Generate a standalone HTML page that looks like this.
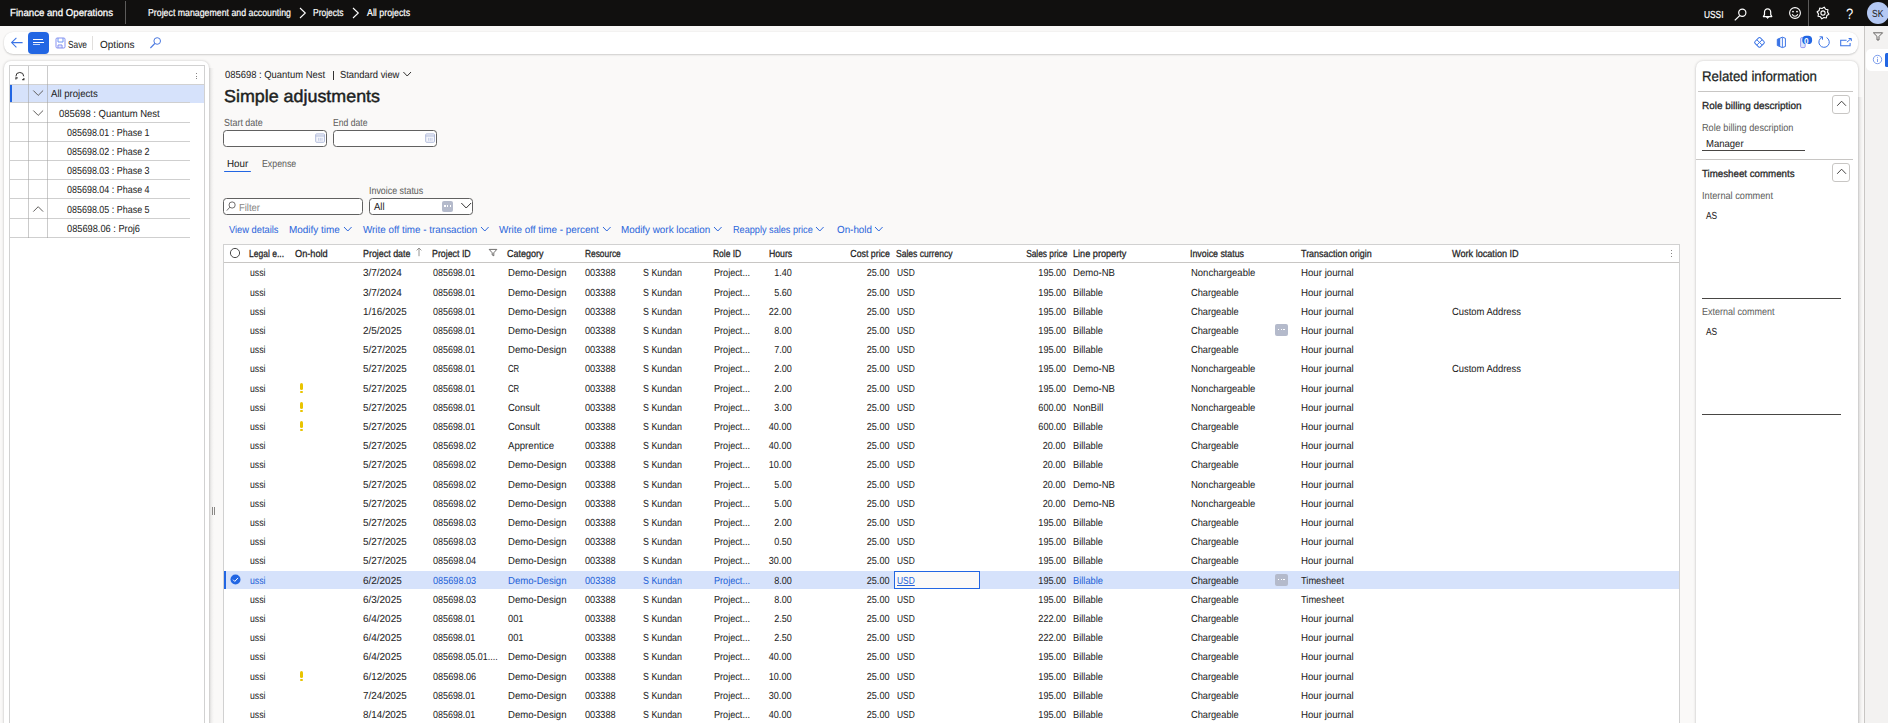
<!DOCTYPE html>
<html lang="en"><head><meta charset="utf-8"><title>Simple adjustments</title>
<style>
html,body{margin:0;padding:0}
body{width:1888px;height:723px;overflow:hidden;position:relative;background:#faf9f8;font-family:'Liberation Sans', sans-serif;text-rendering:geometricPrecision}
.t{position:absolute;white-space:pre;display:block}
</style></head><body>
<div style="position:absolute;left:0px;top:0px;width:1888px;height:26px;background:#11100f"></div>
<div style="position:absolute;left:125px;top:1px;width:1px;height:23px;background:#5c5b5a"></div>
<svg style="position:absolute;left:298px;top:6px;" width="10" height="14" viewBox="0 0 10 14" fill="none"><polyline points="2,2 7.3,7 2,12" stroke="#fff" stroke-width="1.1"/></svg>
<svg style="position:absolute;left:351px;top:6px;" width="10" height="14" viewBox="0 0 10 14" fill="none"><polyline points="2,2 7.3,7 2,12" stroke="#fff" stroke-width="1.1"/></svg>
<svg style="position:absolute;left:1733px;top:6.6px;" width="16" height="16" viewBox="0 0 16 16" fill="none"><circle cx="9.3" cy="5.8" r="3.6" stroke="#fff" stroke-width="1.2"/><line x1="6.7" y1="8.6" x2="1.8" y2="13.4" stroke="#fff" stroke-width="1.3"/></svg>
<svg style="position:absolute;left:1760px;top:6px;" width="16" height="16" viewBox="0 0 16 16" fill="none"><path d="M7.6 2.8c-2 0-3.1 1.5-3.1 3.3v2.5L3.4 10.6h8.4l-1.1-2V6.1c0-1.8-1.1-3.3-3.1-3.3z" stroke="#fff" stroke-width="1.2" stroke-linejoin="round"/><path d="M6.4 11.2h2.4l-1.2 1.4z" fill="#fff" stroke="#fff" stroke-width=".6"/></svg>
<svg style="position:absolute;left:1787px;top:5px;" width="16" height="16" viewBox="0 0 16 16" fill="none"><circle cx="8" cy="8" r="5.4" stroke="#fff" stroke-width="1.1"/><circle cx="6" cy="6.6" r=".9" fill="#fff"/><circle cx="10" cy="6.6" r=".9" fill="#fff"/><path d="M5.2 9.3c.6 1.3 1.6 1.9 2.8 1.9s2.2-.6 2.8-1.9" stroke="#fff" stroke-width="1.1"/></svg>
<div style="position:absolute;left:1808px;top:0px;width:1px;height:26px;background:#5c5b5a"></div>
<svg style="position:absolute;left:1815px;top:5px;" width="16" height="16" viewBox="0 0 16 16" fill="none"><polygon points="13.88,9.17 11.82,10.56 11.33,12.99 8.90,12.51 6.83,13.88 5.44,11.82 3.01,11.33 3.49,8.90 2.12,6.83 4.18,5.44 4.67,3.01 7.10,3.49 9.17,2.12 10.56,4.18 12.99,4.67 12.51,7.10" stroke="#fff" stroke-width="1.1" stroke-linejoin="round"/><circle cx="8" cy="8" r="2.1" stroke="#fff" stroke-width="1.1"/></svg>
<div style="position:absolute;left:1866.5px;top:2px;width:22px;height:22px;background:#b4c8f3;border-radius:50%"></div>
<div style="position:absolute;left:4px;top:32px;width:1854px;height:22px;background:#fff;border-radius:9px;box-shadow:0 1px 2px rgba(0,0,0,.16),0 0 2px rgba(0,0,0,.08)"></div>
<div style="position:absolute;left:28px;top:32px;width:21px;height:22px;background:#2266e3;border-radius:4px"></div>
<div style="position:absolute;left:32.75px;top:39.3px;width:9.8px;height:1.1px;background:#fff"></div>
<div style="position:absolute;left:32.75px;top:41.8px;width:11.3px;height:1.1px;background:#fff"></div>
<div style="position:absolute;left:32.75px;top:44.2px;width:7.5px;height:1.1px;background:rgba(255,255,255,.75)"></div>
<svg style="position:absolute;left:10px;top:36px;" width="14" height="14" viewBox="0 0 14 14" fill="none"><path d="M12.6 6.6H1.8M6.4 1.8L1.6 6.6l4.8 4.8" stroke="#3b74e6" stroke-width="1.05"/></svg>
<svg style="position:absolute;left:54.5px;top:36.5px;" width="12" height="12" viewBox="0 0 12 12" fill="none"><rect x="1" y="1" width="9" height="10" rx="1.2" stroke="#8791f1" stroke-width="1"/><path d="M3 1v4h5V1" stroke="#6f96f3" stroke-width="1"/><path d="M3 11V8h4v3" stroke="#7d8af0" stroke-width="1"/><path d="M5 9.4v1.4" stroke="#9aa6f3" stroke-width=".9"/></svg>
<div style="position:absolute;left:92px;top:36px;width:1px;height:14px;background:#e1dfdd"></div>
<svg style="position:absolute;left:149px;top:36px;" width="14" height="14" viewBox="0 0 14 14" fill="none"><circle cx="8.2" cy="5" r="3.3" stroke="#4a78e0" stroke-width="1"/><line x1="5.8" y1="7.5" x2="1.4" y2="12" stroke="#4a78e0" stroke-width="1.1"/></svg>
<svg style="position:absolute;left:1752px;top:35px;" width="15" height="15" viewBox="0 0 15 15" fill="none"><rect x="3.7" y="3.6" width="7.6" height="7.6" rx="1.3" transform="rotate(45 7.5 7.4)" stroke="#3b74e6" stroke-width="1"/><path d="M5 4.9l5 5M10 4.9l-5 5" stroke="#3b74e6" stroke-width="1"/></svg>
<svg style="position:absolute;left:1774px;top:35px;" width="15" height="15" viewBox="0 0 15 15" fill="none"><path d="M3.3 4.3L8.4 2.2l3 1.1v8.2l-3 1.1L3.3 10.5z" stroke="#3b74e6" stroke-width="1" stroke-linejoin="round"/><path d="M3.3 4.3L6.2 3.2v8.4L3.3 10.5z" fill="#3b74e6"/><path d="M8.4 2.4v10" stroke="#3b74e6" stroke-width=".9"/></svg>
<svg style="position:absolute;left:1798px;top:33px;" width="16" height="18" viewBox="0 0 16 18" fill="none"><rect x="2.6" y="4.6" width="4.6" height="10" rx="1.2" stroke="#8f8ff0" stroke-width=".9" fill="#dfe8fb"/><rect x="4.3" y="2.8" width="9.8" height="8.3" rx="3.9" fill="#2266e3"/></svg>
<svg style="position:absolute;left:1817.2px;top:35.1px;" width="14" height="14" viewBox="0 0 14 14" fill="none"><path d="M5.2 2.3A5.2 5.2 0 1 0 9.6 2.6" stroke="#3b74e6" stroke-width="1"/><path d="M2.6 1.8h2.9v2.9" stroke="#3b74e6" stroke-width="1"/></svg>
<svg style="position:absolute;left:1839px;top:36px;" width="14" height="13" viewBox="0 0 14 13" fill="none"><path d="M7.6 4.2H1.7v5.6h9.4V7" stroke="#3b74e6" stroke-width="1.05"/><path d="M7.9 6.2l4-3.4M9.6 2.5h2.7v2.6" stroke="#3b74e6" stroke-width="1"/></svg>
<div style="position:absolute;left:1865px;top:26px;width:23px;height:700px;background:#f3f2f1"></div>
<div style="position:absolute;left:1864px;top:26px;width:1px;height:700px;background:#c8c6c4"></div>
<svg style="position:absolute;left:1870px;top:29px;" width="15" height="14" viewBox="0 0 15 14" fill="none"><path d="M3.4 3.8h9.2L9 7.4v3.6H7V7.4z" stroke="#605e5c" stroke-width=".95" stroke-linejoin="round"/></svg>
<div style="position:absolute;left:1866px;top:49px;width:22px;height:22px;background:#fff;border-radius:5px 0 0 5px"></div>
<svg style="position:absolute;left:1872px;top:53.5px;" width="11" height="11" viewBox="0 0 11 11" fill="none"><circle cx="5.5" cy="5.5" r="4.2" stroke="#6f93ea" stroke-width=".9"/><line x1="5.5" y1="4.8" x2="5.5" y2="8" stroke="#6f93ea" stroke-width=".9"/><circle cx="5.5" cy="3.3" r=".55" fill="#6f93ea"/></svg>
<div style="position:absolute;left:1885px;top:53px;width:3px;height:13.5px;background:#2266e3;border-radius:1.5px 0 0 1.5px"></div>
<div style="position:absolute;left:4px;top:61px;width:205px;height:700px;background:#fff;border-radius:7px;box-shadow:0 0 3px rgba(0,0,0,.16),0 1px 3px rgba(0,0,0,.10)"></div>
<div style="position:absolute;left:9px;top:65px;width:196px;height:700px;border:1px solid #d1d1d1;box-sizing:border-box"></div>
<div style="position:absolute;left:10px;top:84px;width:194px;height:1px;background:#d1d1d1"></div>
<div style="position:absolute;left:10px;top:85px;width:194px;height:18px;background:#d6e2fb"></div>
<div style="position:absolute;left:10px;top:85px;width:2px;height:18px;background:#2266e3"></div>
<div style="position:absolute;left:10px;top:102px;width:179.5px;height:1px;background:#cfcfcf"></div>
<div style="position:absolute;left:10px;top:122px;width:179.5px;height:1px;background:#cfcfcf"></div>
<div style="position:absolute;left:10px;top:141px;width:179.5px;height:1px;background:#cfcfcf"></div>
<div style="position:absolute;left:10px;top:160px;width:179.5px;height:1px;background:#cfcfcf"></div>
<div style="position:absolute;left:10px;top:179px;width:179.5px;height:1px;background:#cfcfcf"></div>
<div style="position:absolute;left:10px;top:198px;width:179.5px;height:1px;background:#cfcfcf"></div>
<div style="position:absolute;left:10px;top:218px;width:179.5px;height:1px;background:#cfcfcf"></div>
<div style="position:absolute;left:10px;top:237px;width:179.5px;height:1px;background:#cfcfcf"></div>
<div style="position:absolute;left:28px;top:66px;width:1px;height:172px;background:rgba(160,160,160,.55)"></div>
<div style="position:absolute;left:47px;top:66px;width:1px;height:172px;background:rgba(160,160,160,.55)"></div>
<svg style="position:absolute;left:13.5px;top:70px;" width="12" height="12" viewBox="0 0 12 12" fill="none"><path d="M1.9 6.4a3.9 3.9 0 0 1 7.8-.1" stroke="#323130" stroke-width="1"/><path d="M1.9 9.6V7.9h1.8" stroke="#323130" stroke-width="1.1"/><path d="M9.9 7.9v1.7H8.2" stroke="#323130" stroke-width="1.1"/></svg>
<div style="position:absolute;left:196.4px;top:72.6px;width:1.1px;height:1.1px;background:#605e5c;border-radius:50%"></div>
<div style="position:absolute;left:196.4px;top:75.5px;width:1.1px;height:1.1px;background:#605e5c;border-radius:50%"></div>
<div style="position:absolute;left:196.4px;top:78.39999999999999px;width:1.1px;height:1.1px;background:#605e5c;border-radius:50%"></div>
<svg style="position:absolute;left:32px;top:88px;" width="12" height="10" viewBox="0 0 12 10" fill="none"><polyline points="1.3,2.5 6.2,7.4 11.1,2.5" stroke="#605e5c" stroke-width="1"/></svg>
<svg style="position:absolute;left:32px;top:108px;" width="12" height="10" viewBox="0 0 12 10" fill="none"><polyline points="1.3,2.5 6.2,7.4 11.1,2.5" stroke="#605e5c" stroke-width="1"/></svg>
<svg style="position:absolute;left:32px;top:204px;" width="12" height="10" viewBox="0 0 12 10" fill="none"><polyline points="1.3,7.6 6.2,2.7 11.1,7.6" stroke="#605e5c" stroke-width="1"/></svg>
<div style="position:absolute;left:209px;top:68px;width:4.5px;height:700px;background:linear-gradient(90deg,rgba(0,0,0,.075),rgba(0,0,0,0))"></div>
<div style="position:absolute;left:211.8px;top:506.5px;width:1.2px;height:8px;background:#8a8886"></div>
<div style="position:absolute;left:213.7px;top:506.5px;width:1.2px;height:8px;background:#8a8886"></div>
<div style="position:absolute;left:333px;top:70.5px;width:1px;height:9.5px;background:#323130"></div>
<svg style="position:absolute;left:402px;top:70px;" width="11" height="9" viewBox="0 0 11 9" fill="none"><polyline points="1.4,2 5.2,6 9,2" stroke="#323130" stroke-width="1"/></svg>
<div style="position:absolute;left:223px;top:130px;width:104px;height:17px;background:#fff;border:1px solid #616161;border-radius:3.5px;box-sizing:border-box"></div>
<div style="position:absolute;left:333px;top:130px;width:104px;height:17px;background:#fff;border:1px solid #616161;border-radius:3.5px;box-sizing:border-box"></div>
<svg style="position:absolute;left:315.2px;top:132.9px;" width="10.4" height="10.4" viewBox="0 0 10.4 10.4" fill="none"><rect x=".7" y=".9" width="8.8" height="8.4" rx=".9" stroke="#a9b4d6" stroke-width=".9" fill="#f4f6fc"/><line x1=".7" y1="3" x2="9.5" y2="3" stroke="#a9b4d6" stroke-width=".9"/><path d="M3.6 4.9v2.9M5.3 4.9v2.9M7 4.9v2.9" stroke="#b9c2de" stroke-width=".8"/></svg>
<svg style="position:absolute;left:425.2px;top:132.9px;" width="10.4" height="10.4" viewBox="0 0 10.4 10.4" fill="none"><rect x=".7" y=".9" width="8.8" height="8.4" rx=".9" stroke="#a9b4d6" stroke-width=".9" fill="#f4f6fc"/><line x1=".7" y1="3" x2="9.5" y2="3" stroke="#a9b4d6" stroke-width=".9"/><path d="M3.6 4.9v2.9M5.3 4.9v2.9M7 4.9v2.9" stroke="#b9c2de" stroke-width=".8"/></svg>
<div style="position:absolute;left:223.8px;top:170.5px;width:27.5px;height:1.5px;background:#2266e3;border-radius:1px"></div>
<div style="position:absolute;left:223px;top:198px;width:140px;height:17px;background:#fff;border:1px solid #616161;border-radius:3.5px;box-sizing:border-box"></div>
<svg style="position:absolute;left:225.8px;top:201px;" width="10" height="11" viewBox="0 0 10 11" fill="none"><circle cx="6.1" cy="4" r="3.1" stroke="#605e5c" stroke-width=".9"/><line x1="3.8" y1="6.2" x2=".8" y2="9.6" stroke="#605e5c" stroke-width=".9"/></svg>
<div style="position:absolute;left:369px;top:198px;width:104px;height:17px;background:#fff;border:1px solid #616161;border-radius:3.5px;box-sizing:border-box"></div>
<div style="position:absolute;left:442px;top:200.5px;width:11.3px;height:11px;background:#b4bacb;border-radius:2px"></div>
<div style="position:absolute;left:444.3px;top:205.3px;width:1.3px;height:1.3px;background:#fff"></div>
<div style="position:absolute;left:446.90000000000003px;top:205.3px;width:1.3px;height:1.3px;background:#fff"></div>
<div style="position:absolute;left:449.5px;top:205.3px;width:1.3px;height:1.3px;background:#fff"></div>
<svg style="position:absolute;left:459.5px;top:201px;" width="12" height="10" viewBox="0 0 12 10" fill="none"><polyline points="1.3,2 6.2,7 11.1,2" stroke="#323130" stroke-width="1"/></svg>
<svg style="position:absolute;left:343.15px;top:225.2px;" width="10" height="9" viewBox="0 0 10 9" fill="none"><polyline points="1,2 4.8,6 8.6,2" stroke="#2e68dc" stroke-width="1"/></svg>
<svg style="position:absolute;left:479.9px;top:225.2px;" width="10" height="9" viewBox="0 0 10 9" fill="none"><polyline points="1,2 4.8,6 8.6,2" stroke="#2e68dc" stroke-width="1"/></svg>
<svg style="position:absolute;left:601.9px;top:225.2px;" width="10" height="9" viewBox="0 0 10 9" fill="none"><polyline points="1,2 4.8,6 8.6,2" stroke="#2e68dc" stroke-width="1"/></svg>
<svg style="position:absolute;left:712.9px;top:225.2px;" width="10" height="9" viewBox="0 0 10 9" fill="none"><polyline points="1,2 4.8,6 8.6,2" stroke="#2e68dc" stroke-width="1"/></svg>
<svg style="position:absolute;left:815.4px;top:225.2px;" width="10" height="9" viewBox="0 0 10 9" fill="none"><polyline points="1,2 4.8,6 8.6,2" stroke="#2e68dc" stroke-width="1"/></svg>
<svg style="position:absolute;left:874.4px;top:225.2px;" width="10" height="9" viewBox="0 0 10 9" fill="none"><polyline points="1,2 4.8,6 8.6,2" stroke="#2e68dc" stroke-width="1"/></svg>
<div style="position:absolute;left:223px;top:244px;width:1457px;height:500px;background:#fff;border:1px solid #d1d1d1;box-sizing:border-box"></div>
<div style="position:absolute;left:224px;top:262px;width:1455px;height:1px;background:#c8c6c4"></div>
<svg style="position:absolute;left:229px;top:246.7px;" width="12" height="12" viewBox="0 0 12 12" fill="none"><circle cx="6" cy="6" r="4.6" stroke="#4a4a4a" stroke-width="1" fill="#fff"/></svg>
<svg style="position:absolute;left:414.5px;top:247px;" width="8" height="10" viewBox="0 0 8 10" fill="none"><path d="M4 9.2V1.2M1.6 3.4L4 1l2.4 2.4" stroke="#8a8886" stroke-width=".9"/></svg>
<svg style="position:absolute;left:488.2px;top:247.7px;" width="10" height="9" viewBox="0 0 10 9" fill="none"><path d="M1.2 1.4h7.6L5.8 4.8v3L4.2 7V4.8z" stroke="#605e5c" stroke-width=".9" stroke-linejoin="round"/></svg>
<div style="position:absolute;left:1670.6px;top:250.4px;width:1.1px;height:1.1px;background:#605e5c;border-radius:50%"></div>
<div style="position:absolute;left:1670.6px;top:253.3px;width:1.1px;height:1.1px;background:#605e5c;border-radius:50%"></div>
<div style="position:absolute;left:1670.6px;top:256.2px;width:1.1px;height:1.1px;background:#605e5c;border-radius:50%"></div>
<div style="position:absolute;left:1275.3px;top:323.9px;width:12.6px;height:12.4px;background:#b4bacb;border-radius:2px"></div>
<div style="position:absolute;left:1277.9px;top:329.1px;width:1.4px;height:1.4px;background:#fff"></div>
<div style="position:absolute;left:1280.6000000000001px;top:329.1px;width:1.4px;height:1.4px;background:#fff"></div>
<div style="position:absolute;left:1283.3000000000002px;top:329.1px;width:1.4px;height:1.4px;background:#fff"></div>
<div style="position:absolute;left:300.2px;top:382.9px;width:3.2px;height:7.2px;background:#e9c400;border-radius:1.6px"></div>
<div style="position:absolute;left:300.4px;top:391.0px;width:2.8px;height:2.1px;background:#e9c400;border-radius:1px"></div>
<div style="position:absolute;left:300.2px;top:401.9px;width:3.2px;height:7.2px;background:#e9c400;border-radius:1.6px"></div>
<div style="position:absolute;left:300.4px;top:410.0px;width:2.8px;height:2.1px;background:#e9c400;border-radius:1px"></div>
<div style="position:absolute;left:300.2px;top:420.9px;width:3.2px;height:7.2px;background:#e9c400;border-radius:1.6px"></div>
<div style="position:absolute;left:300.4px;top:429.0px;width:2.8px;height:2.1px;background:#e9c400;border-radius:1px"></div>
<div style="position:absolute;left:224px;top:571px;width:1455px;height:18.4px;background:#d6e2fb"></div>
<div style="position:absolute;left:224px;top:571px;width:2.2px;height:18.4px;background:#2266e3"></div>
<svg style="position:absolute;left:229.5px;top:574.3px;" width="11" height="11" viewBox="0 0 11 11" fill="none"><circle cx="5.5" cy="5.5" r="5" fill="#2266e3"/><polyline points="3.1,5.7 4.8,7.4 8,3.9" stroke="#fff" stroke-width="1"/></svg>
<div style="position:absolute;left:894px;top:571.2px;width:86px;height:17.4px;background:#faf9f8;border:1px solid #2266e3;box-sizing:border-box"></div>
<div style="position:absolute;left:1275.3px;top:573.9px;width:12.6px;height:12.4px;background:#b4bacb;border-radius:2px"></div>
<div style="position:absolute;left:1277.9px;top:579.1px;width:1.4px;height:1.4px;background:#fff"></div>
<div style="position:absolute;left:1280.6000000000001px;top:579.1px;width:1.4px;height:1.4px;background:#fff"></div>
<div style="position:absolute;left:1283.3000000000002px;top:579.1px;width:1.4px;height:1.4px;background:#fff"></div>
<div style="position:absolute;left:300.2px;top:670.9px;width:3.2px;height:7.2px;background:#e9c400;border-radius:1.6px"></div>
<div style="position:absolute;left:300.4px;top:679.0px;width:2.8px;height:2.1px;background:#e9c400;border-radius:1px"></div>
<div style="position:absolute;left:1696px;top:61px;width:162px;height:700px;background:#fff;border-radius:7px;box-shadow:0 0 3px rgba(0,0,0,.16),0 1px 3px rgba(0,0,0,.10)"></div>
<div style="position:absolute;left:1858px;top:97px;width:4.5px;height:700px;background:linear-gradient(90deg,rgba(0,0,0,.085),rgba(0,0,0,0))"></div>
<div style="position:absolute;left:1698px;top:91px;width:155px;height:1px;background:#c8c6c4"></div>
<div style="position:absolute;left:1832px;top:95.4px;width:18px;height:18.4px;background:#fff;border:1px solid #c8c6c4;border-radius:3px;box-sizing:border-box"></div>
<svg style="position:absolute;left:1835.5px;top:98.6px;" width="11" height="9" viewBox="0 0 11 9" fill="none"><polyline points="1.2,6.8 5.6,2.2 10,6.8" stroke="#3b3a39" stroke-width=".95"/></svg>
<div style="position:absolute;left:1701.5px;top:150px;width:103px;height:1px;background:#484644"></div>
<div style="position:absolute;left:1696px;top:159px;width:157px;height:1px;background:#c8c6c4"></div>
<div style="position:absolute;left:1832px;top:163.4px;width:18px;height:19px;background:#fff;border:1px solid #c8c6c4;border-radius:3px;box-sizing:border-box"></div>
<svg style="position:absolute;left:1835.5px;top:167.1px;" width="11" height="9" viewBox="0 0 11 9" fill="none"><polyline points="1.2,6.8 5.6,2.2 10,6.8" stroke="#3b3a39" stroke-width=".95"/></svg>
<div style="position:absolute;left:1701.5px;top:298px;width:139px;height:1px;background:#484644"></div>
<div style="position:absolute;left:1701.5px;top:414px;width:139px;height:1px;background:#484644"></div>
<span class="t" style="left:10.30px;transform-origin:0 50%;top:7.25px;font-size:10.2px;line-height:14px;color:#fff;transform:scaleX(0.9471);-webkit-text-stroke:0.27px #fff;">Finance and Operations</span>
<span class="t" style="left:147.80px;transform-origin:0 50%;top:7.25px;font-size:10.2px;line-height:14px;color:#fff;transform:scaleX(0.8618);-webkit-text-stroke:0.2px #fff;">Project management and accounting</span>
<span class="t" style="left:313.30px;transform-origin:0 50%;top:7.25px;font-size:10.2px;line-height:14px;color:#fff;transform:scaleX(0.8285);-webkit-text-stroke:0.2px #fff;">Projects</span>
<span class="t" style="left:366.55px;transform-origin:0 50%;top:7.25px;font-size:10.2px;line-height:14px;color:#fff;transform:scaleX(0.8680);-webkit-text-stroke:0.2px #fff;">All projects</span>
<span class="t" style="left:1703.55px;transform-origin:0 50%;top:9.25px;font-size:10.2px;line-height:14px;color:#fff;transform:scaleX(0.8200);-webkit-text-stroke:0.2px #fff;">USSI</span>
<span class="t" style="left:1845.70px;transform-origin:0 50%;top:5.25px;font-size:15px;line-height:20px;color:#fff;transform:scaleX(0.8629);-webkit-text-stroke:0.0px #fff;">?</span>
<span class="t" style="left:1872.40px;transform-origin:0 50%;top:8.25px;font-size:10.2px;line-height:14px;color:#242424;transform:scaleX(0.8386);-webkit-text-stroke:0.04px #242424;">SK</span>
<span class="t" style="left:67.80px;transform-origin:0 50%;top:39.25px;font-size:10.2px;line-height:14px;color:#242424;transform:scaleX(0.8178);-webkit-text-stroke:0.04px #242424;">Save</span>
<span class="t" style="left:99.80px;transform-origin:0 50%;top:39.25px;font-size:10.2px;line-height:14px;color:#242424;transform:scaleX(0.9826);-webkit-text-stroke:0.04px #242424;">Options</span>
<span class="t" style="left:1804.20px;transform-origin:0 50%;top:35.25px;font-size:8.5px;line-height:12px;color:#fff;transform:scaleX(0.9716);font-weight:700;">0</span>
<span class="t" style="left:51.40px;transform-origin:0 50%;top:88.25px;font-size:10.2px;line-height:14px;color:#242424;transform:scaleX(0.9392);-webkit-text-stroke:0.04px #242424;">All projects</span>
<span class="t" style="left:58.80px;transform-origin:0 50%;top:108.25px;font-size:10.2px;line-height:14px;color:#242424;transform:scaleX(0.9314);-webkit-text-stroke:0.04px #242424;">085698 : Quantum Nest</span>
<span class="t" style="left:66.90px;transform-origin:0 50%;top:127.25px;font-size:10.2px;line-height:14px;color:#242424;transform:scaleX(0.8784);-webkit-text-stroke:0.04px #242424;">085698.01 : Phase 1</span>
<span class="t" style="left:66.90px;transform-origin:0 50%;top:146.25px;font-size:10.2px;line-height:14px;color:#242424;transform:scaleX(0.8784);-webkit-text-stroke:0.04px #242424;">085698.02 : Phase 2</span>
<span class="t" style="left:66.90px;transform-origin:0 50%;top:165.25px;font-size:10.2px;line-height:14px;color:#242424;transform:scaleX(0.8784);-webkit-text-stroke:0.04px #242424;">085698.03 : Phase 3</span>
<span class="t" style="left:66.90px;transform-origin:0 50%;top:184.25px;font-size:10.2px;line-height:14px;color:#242424;transform:scaleX(0.8784);-webkit-text-stroke:0.04px #242424;">085698.04 : Phase 4</span>
<span class="t" style="left:66.90px;transform-origin:0 50%;top:204.25px;font-size:10.2px;line-height:14px;color:#242424;transform:scaleX(0.8784);-webkit-text-stroke:0.04px #242424;">085698.05 : Phase 5</span>
<span class="t" style="left:66.90px;transform-origin:0 50%;top:223.25px;font-size:10.2px;line-height:14px;color:#242424;transform:scaleX(0.9075);-webkit-text-stroke:0.04px #242424;">085698.06 : Proj6</span>
<span class="t" style="left:224.55px;transform-origin:0 50%;top:69.25px;font-size:10.2px;line-height:14px;color:#242424;transform:scaleX(0.9245);-webkit-text-stroke:0.04px #242424;">085698 : Quantum Nest</span>
<span class="t" style="left:340.40px;transform-origin:0 50%;top:69.25px;font-size:10.2px;line-height:14px;color:#242424;transform:scaleX(0.9200);-webkit-text-stroke:0.04px #242424;">Standard view</span>
<span class="t" style="left:223.80px;transform-origin:0 50%;top:85.25px;font-size:17.3px;line-height:22px;color:#201f1e;transform:scaleX(1.0344);-webkit-text-stroke:0.45px #201f1e;">Simple adjustments</span>
<span class="t" style="left:223.55px;transform-origin:0 50%;top:117.25px;font-size:10.2px;line-height:14px;color:#605e5c;transform:scaleX(0.8769);-webkit-text-stroke:0.04px #605e5c;">Start date</span>
<span class="t" style="left:333.30px;transform-origin:0 50%;top:117.25px;font-size:10.2px;line-height:14px;color:#605e5c;transform:scaleX(0.8457);-webkit-text-stroke:0.04px #605e5c;">End date</span>
<span class="t" style="left:227.30px;transform-origin:0 50%;top:158.25px;font-size:10.2px;line-height:14px;color:#242424;transform:scaleX(0.9618);-webkit-text-stroke:0.04px #242424;">Hour</span>
<span class="t" style="left:261.55px;transform-origin:0 50%;top:158.25px;font-size:10.2px;line-height:14px;color:#605e5c;transform:scaleX(0.8637);-webkit-text-stroke:0.04px #605e5c;">Expense</span>
<span class="t" style="left:369.30px;transform-origin:0 50%;top:185.25px;font-size:10.2px;line-height:14px;color:#605e5c;transform:scaleX(0.8708);-webkit-text-stroke:0.04px #605e5c;">Invoice status</span>
<span class="t" style="left:238.55px;transform-origin:0 50%;top:202.25px;font-size:10.2px;line-height:14px;color:#8a8886;transform:scaleX(0.9275);-webkit-text-stroke:0.04px #8a8886;">Filter</span>
<span class="t" style="left:373.55px;transform-origin:0 50%;top:201.25px;font-size:10.2px;line-height:14px;color:#242424;transform:scaleX(0.9269);-webkit-text-stroke:0.04px #242424;">All</span>
<span class="t" style="left:228.55px;transform-origin:0 50%;top:224.25px;font-size:10.2px;line-height:14px;color:#2e68dc;transform:scaleX(0.9135);-webkit-text-stroke:0.04px #2e68dc;">View details</span>
<span class="t" style="left:289.30px;transform-origin:0 50%;top:224.25px;font-size:10.2px;line-height:14px;color:#2e68dc;transform:scaleX(0.9742);-webkit-text-stroke:0.04px #2e68dc;">Modify time</span>
<span class="t" style="left:362.55px;transform-origin:0 50%;top:224.25px;font-size:10.2px;line-height:14px;color:#2e68dc;transform:scaleX(0.9639);-webkit-text-stroke:0.04px #2e68dc;">Write off time - transaction</span>
<span class="t" style="left:499.05px;transform-origin:0 50%;top:224.25px;font-size:10.2px;line-height:14px;color:#2e68dc;transform:scaleX(0.9715);-webkit-text-stroke:0.04px #2e68dc;">Write off time - percent</span>
<span class="t" style="left:621.30px;transform-origin:0 50%;top:224.25px;font-size:10.2px;line-height:14px;color:#2e68dc;transform:scaleX(0.9670);-webkit-text-stroke:0.04px #2e68dc;">Modify work location</span>
<span class="t" style="left:733.05px;transform-origin:0 50%;top:224.25px;font-size:10.2px;line-height:14px;color:#2e68dc;transform:scaleX(0.8970);-webkit-text-stroke:0.04px #2e68dc;">Reapply sales price</span>
<span class="t" style="left:836.80px;transform-origin:0 50%;top:224.25px;font-size:10.2px;line-height:14px;color:#2e68dc;transform:scaleX(0.9655);-webkit-text-stroke:0.04px #2e68dc;">On-hold</span>
<span class="t" style="left:249.30px;transform-origin:0 50%;top:248.25px;font-size:10.2px;line-height:14px;color:#242424;transform:scaleX(0.8349);-webkit-text-stroke:0.27px #242424;">Legal e...</span>
<span class="t" style="left:295.30px;transform-origin:0 50%;top:248.25px;font-size:10.2px;line-height:14px;color:#242424;transform:scaleX(0.9034);-webkit-text-stroke:0.27px #242424;">On-hold</span>
<span class="t" style="left:363.30px;transform-origin:0 50%;top:248.25px;font-size:10.2px;line-height:14px;color:#242424;transform:scaleX(0.8736);-webkit-text-stroke:0.27px #242424;">Project date</span>
<span class="t" style="left:432.05px;transform-origin:0 50%;top:248.25px;font-size:10.2px;line-height:14px;color:#242424;transform:scaleX(0.8662);-webkit-text-stroke:0.27px #242424;">Project ID</span>
<span class="t" style="left:507.05px;transform-origin:0 50%;top:248.25px;font-size:10.2px;line-height:14px;color:#242424;transform:scaleX(0.8828);-webkit-text-stroke:0.27px #242424;">Category</span>
<span class="t" style="left:584.80px;transform-origin:0 50%;top:248.25px;font-size:10.2px;line-height:14px;color:#242424;transform:scaleX(0.8198);-webkit-text-stroke:0.27px #242424;">Resource</span>
<span class="t" style="left:712.80px;transform-origin:0 50%;top:248.25px;font-size:10.2px;line-height:14px;color:#242424;transform:scaleX(0.8313);-webkit-text-stroke:0.27px #242424;">Role ID</span>
<span class="t" style="right:1095.5px;transform-origin:100% 50%;top:248.25px;font-size:10.2px;line-height:14px;color:#242424;transform:scaleX(0.8552);-webkit-text-stroke:0.27px #242424;">Hours</span>
<span class="t" style="right:998.5px;transform-origin:100% 50%;top:248.25px;font-size:10.2px;line-height:14px;color:#242424;transform:scaleX(0.8613);-webkit-text-stroke:0.27px #242424;">Cost price</span>
<span class="t" style="left:896.05px;transform-origin:0 50%;top:248.25px;font-size:10.2px;line-height:14px;color:#242424;transform:scaleX(0.8384);-webkit-text-stroke:0.27px #242424;">Sales currency</span>
<span class="t" style="right:821px;transform-origin:100% 50%;top:248.25px;font-size:10.2px;line-height:14px;color:#242424;transform:scaleX(0.8184);-webkit-text-stroke:0.27px #242424;">Sales price</span>
<span class="t" style="left:1072.80px;transform-origin:0 50%;top:248.25px;font-size:10.2px;line-height:14px;color:#242424;transform:scaleX(0.8963);-webkit-text-stroke:0.27px #242424;">Line property</span>
<span class="t" style="left:1189.80px;transform-origin:0 50%;top:248.25px;font-size:10.2px;line-height:14px;color:#242424;transform:scaleX(0.8668);-webkit-text-stroke:0.27px #242424;">Invoice status</span>
<span class="t" style="left:1300.80px;transform-origin:0 50%;top:248.25px;font-size:10.2px;line-height:14px;color:#242424;transform:scaleX(0.8771);-webkit-text-stroke:0.27px #242424;">Transaction origin</span>
<span class="t" style="left:1451.80px;transform-origin:0 50%;top:248.25px;font-size:10.2px;line-height:14px;color:#242424;transform:scaleX(0.8947);-webkit-text-stroke:0.27px #242424;">Work location ID</span>
<span class="t" style="left:249.80px;transform-origin:0 50%;top:267.25px;font-size:10.2px;line-height:14px;color:#242424;transform:scaleX(0.8552);-webkit-text-stroke:0.04px #242424;">ussi</span>
<span class="t" style="left:363.30px;transform-origin:0 50%;top:267.25px;font-size:10.2px;line-height:14px;color:#242424;transform:scaleX(0.9759);-webkit-text-stroke:0.04px #242424;">3/7/2024</span>
<span class="t" style="left:432.55px;transform-origin:0 50%;top:267.25px;font-size:10.2px;line-height:14px;color:#242424;transform:scaleX(0.8771);-webkit-text-stroke:0.04px #242424;">085698.01</span>
<span class="t" style="left:507.55px;transform-origin:0 50%;top:267.25px;font-size:10.2px;line-height:14px;color:#242424;transform:scaleX(0.9393);-webkit-text-stroke:0.04px #242424;">Demo-Design</span>
<span class="t" style="left:585.30px;transform-origin:0 50%;top:267.25px;font-size:10.2px;line-height:14px;color:#242424;transform:scaleX(0.9044);-webkit-text-stroke:0.04px #242424;">003388</span>
<span class="t" style="left:642.80px;transform-origin:0 50%;top:267.25px;font-size:10.2px;line-height:14px;color:#242424;transform:scaleX(0.8715);-webkit-text-stroke:0.04px #242424;">S Kundan</span>
<span class="t" style="left:714.05px;transform-origin:0 50%;top:267.25px;font-size:10.2px;line-height:14px;color:#242424;transform:scaleX(0.8955);-webkit-text-stroke:0.04px #242424;">Project...</span>
<span class="t" style="right:1096.5px;transform-origin:100% 50%;top:267.25px;font-size:10.2px;line-height:14px;color:#242424;transform:scaleX(0.8901);-webkit-text-stroke:0.04px #242424;">1.40</span>
<span class="t" style="right:999px;transform-origin:100% 50%;top:267.25px;font-size:10.2px;line-height:14px;color:#242424;transform:scaleX(0.8922);-webkit-text-stroke:0.04px #242424;">25.00</span>
<span class="t" style="left:896.55px;transform-origin:0 50%;top:267.25px;font-size:10.2px;line-height:14px;color:#242424;transform:scaleX(0.8250);-webkit-text-stroke:0.04px #242424;">USD</span>
<span class="t" style="right:822.25px;transform-origin:100% 50%;top:267.25px;font-size:10.2px;line-height:14px;color:#242424;transform:scaleX(0.8934);-webkit-text-stroke:0.04px #242424;">195.00</span>
<span class="t" style="left:1073.10px;transform-origin:0 50%;top:267.25px;font-size:10.2px;line-height:14px;color:#242424;transform:scaleX(0.9389);-webkit-text-stroke:0.04px #242424;">Demo-NB</span>
<span class="t" style="left:1190.80px;transform-origin:0 50%;top:267.25px;font-size:10.2px;line-height:14px;color:#242424;transform:scaleX(0.9304);-webkit-text-stroke:0.04px #242424;">Nonchargeable</span>
<span class="t" style="left:1301.10px;transform-origin:0 50%;top:267.25px;font-size:10.2px;line-height:14px;color:#242424;transform:scaleX(0.9495);-webkit-text-stroke:0.04px #242424;">Hour journal</span>
<span class="t" style="left:249.80px;transform-origin:0 50%;top:287.25px;font-size:10.2px;line-height:14px;color:#242424;transform:scaleX(0.8552);-webkit-text-stroke:0.04px #242424;">ussi</span>
<span class="t" style="left:363.30px;transform-origin:0 50%;top:287.25px;font-size:10.2px;line-height:14px;color:#242424;transform:scaleX(0.9759);-webkit-text-stroke:0.04px #242424;">3/7/2024</span>
<span class="t" style="left:432.55px;transform-origin:0 50%;top:287.25px;font-size:10.2px;line-height:14px;color:#242424;transform:scaleX(0.8771);-webkit-text-stroke:0.04px #242424;">085698.01</span>
<span class="t" style="left:507.55px;transform-origin:0 50%;top:287.25px;font-size:10.2px;line-height:14px;color:#242424;transform:scaleX(0.9393);-webkit-text-stroke:0.04px #242424;">Demo-Design</span>
<span class="t" style="left:585.30px;transform-origin:0 50%;top:287.25px;font-size:10.2px;line-height:14px;color:#242424;transform:scaleX(0.9044);-webkit-text-stroke:0.04px #242424;">003388</span>
<span class="t" style="left:642.80px;transform-origin:0 50%;top:287.25px;font-size:10.2px;line-height:14px;color:#242424;transform:scaleX(0.8715);-webkit-text-stroke:0.04px #242424;">S Kundan</span>
<span class="t" style="left:714.05px;transform-origin:0 50%;top:287.25px;font-size:10.2px;line-height:14px;color:#242424;transform:scaleX(0.8955);-webkit-text-stroke:0.04px #242424;">Project...</span>
<span class="t" style="right:1096.5px;transform-origin:100% 50%;top:287.25px;font-size:10.2px;line-height:14px;color:#242424;transform:scaleX(0.8901);-webkit-text-stroke:0.04px #242424;">5.60</span>
<span class="t" style="right:999px;transform-origin:100% 50%;top:287.25px;font-size:10.2px;line-height:14px;color:#242424;transform:scaleX(0.8922);-webkit-text-stroke:0.04px #242424;">25.00</span>
<span class="t" style="left:896.55px;transform-origin:0 50%;top:287.25px;font-size:10.2px;line-height:14px;color:#242424;transform:scaleX(0.8250);-webkit-text-stroke:0.04px #242424;">USD</span>
<span class="t" style="right:822.25px;transform-origin:100% 50%;top:287.25px;font-size:10.2px;line-height:14px;color:#242424;transform:scaleX(0.8934);-webkit-text-stroke:0.04px #242424;">195.00</span>
<span class="t" style="left:1073.10px;transform-origin:0 50%;top:287.25px;font-size:10.2px;line-height:14px;color:#242424;transform:scaleX(0.9130);-webkit-text-stroke:0.04px #242424;">Billable</span>
<span class="t" style="left:1190.80px;transform-origin:0 50%;top:287.25px;font-size:10.2px;line-height:14px;color:#242424;transform:scaleX(0.9053);-webkit-text-stroke:0.04px #242424;">Chargeable</span>
<span class="t" style="left:1301.10px;transform-origin:0 50%;top:287.25px;font-size:10.2px;line-height:14px;color:#242424;transform:scaleX(0.9495);-webkit-text-stroke:0.04px #242424;">Hour journal</span>
<span class="t" style="left:249.80px;transform-origin:0 50%;top:306.25px;font-size:10.2px;line-height:14px;color:#242424;transform:scaleX(0.8552);-webkit-text-stroke:0.04px #242424;">ussi</span>
<span class="t" style="left:363.30px;transform-origin:0 50%;top:306.25px;font-size:10.2px;line-height:14px;color:#242424;transform:scaleX(0.9663);-webkit-text-stroke:0.04px #242424;">1/16/2025</span>
<span class="t" style="left:432.55px;transform-origin:0 50%;top:306.25px;font-size:10.2px;line-height:14px;color:#242424;transform:scaleX(0.8771);-webkit-text-stroke:0.04px #242424;">085698.01</span>
<span class="t" style="left:507.55px;transform-origin:0 50%;top:306.25px;font-size:10.2px;line-height:14px;color:#242424;transform:scaleX(0.9393);-webkit-text-stroke:0.04px #242424;">Demo-Design</span>
<span class="t" style="left:585.30px;transform-origin:0 50%;top:306.25px;font-size:10.2px;line-height:14px;color:#242424;transform:scaleX(0.9044);-webkit-text-stroke:0.04px #242424;">003388</span>
<span class="t" style="left:642.80px;transform-origin:0 50%;top:306.25px;font-size:10.2px;line-height:14px;color:#242424;transform:scaleX(0.8715);-webkit-text-stroke:0.04px #242424;">S Kundan</span>
<span class="t" style="left:714.05px;transform-origin:0 50%;top:306.25px;font-size:10.2px;line-height:14px;color:#242424;transform:scaleX(0.8955);-webkit-text-stroke:0.04px #242424;">Project...</span>
<span class="t" style="right:1096.5px;transform-origin:100% 50%;top:306.25px;font-size:10.2px;line-height:14px;color:#242424;transform:scaleX(0.8922);-webkit-text-stroke:0.04px #242424;">22.00</span>
<span class="t" style="right:999px;transform-origin:100% 50%;top:306.25px;font-size:10.2px;line-height:14px;color:#242424;transform:scaleX(0.8922);-webkit-text-stroke:0.04px #242424;">25.00</span>
<span class="t" style="left:896.55px;transform-origin:0 50%;top:306.25px;font-size:10.2px;line-height:14px;color:#242424;transform:scaleX(0.8250);-webkit-text-stroke:0.04px #242424;">USD</span>
<span class="t" style="right:822.25px;transform-origin:100% 50%;top:306.25px;font-size:10.2px;line-height:14px;color:#242424;transform:scaleX(0.8934);-webkit-text-stroke:0.04px #242424;">195.00</span>
<span class="t" style="left:1073.10px;transform-origin:0 50%;top:306.25px;font-size:10.2px;line-height:14px;color:#242424;transform:scaleX(0.9130);-webkit-text-stroke:0.04px #242424;">Billable</span>
<span class="t" style="left:1190.80px;transform-origin:0 50%;top:306.25px;font-size:10.2px;line-height:14px;color:#242424;transform:scaleX(0.9053);-webkit-text-stroke:0.04px #242424;">Chargeable</span>
<span class="t" style="left:1301.10px;transform-origin:0 50%;top:306.25px;font-size:10.2px;line-height:14px;color:#242424;transform:scaleX(0.9495);-webkit-text-stroke:0.04px #242424;">Hour journal</span>
<span class="t" style="left:1451.80px;transform-origin:0 50%;top:306.25px;font-size:10.2px;line-height:14px;color:#242424;transform:scaleX(0.9231);-webkit-text-stroke:0.04px #242424;">Custom Address</span>
<span class="t" style="left:249.80px;transform-origin:0 50%;top:325.25px;font-size:10.2px;line-height:14px;color:#242424;transform:scaleX(0.8552);-webkit-text-stroke:0.04px #242424;">ussi</span>
<span class="t" style="left:363.30px;transform-origin:0 50%;top:325.25px;font-size:10.2px;line-height:14px;color:#242424;transform:scaleX(0.9759);-webkit-text-stroke:0.04px #242424;">2/5/2025</span>
<span class="t" style="left:432.55px;transform-origin:0 50%;top:325.25px;font-size:10.2px;line-height:14px;color:#242424;transform:scaleX(0.8771);-webkit-text-stroke:0.04px #242424;">085698.01</span>
<span class="t" style="left:507.55px;transform-origin:0 50%;top:325.25px;font-size:10.2px;line-height:14px;color:#242424;transform:scaleX(0.9393);-webkit-text-stroke:0.04px #242424;">Demo-Design</span>
<span class="t" style="left:585.30px;transform-origin:0 50%;top:325.25px;font-size:10.2px;line-height:14px;color:#242424;transform:scaleX(0.9044);-webkit-text-stroke:0.04px #242424;">003388</span>
<span class="t" style="left:642.80px;transform-origin:0 50%;top:325.25px;font-size:10.2px;line-height:14px;color:#242424;transform:scaleX(0.8715);-webkit-text-stroke:0.04px #242424;">S Kundan</span>
<span class="t" style="left:714.05px;transform-origin:0 50%;top:325.25px;font-size:10.2px;line-height:14px;color:#242424;transform:scaleX(0.8955);-webkit-text-stroke:0.04px #242424;">Project...</span>
<span class="t" style="right:1096.5px;transform-origin:100% 50%;top:325.25px;font-size:10.2px;line-height:14px;color:#242424;transform:scaleX(0.8901);-webkit-text-stroke:0.04px #242424;">8.00</span>
<span class="t" style="right:999px;transform-origin:100% 50%;top:325.25px;font-size:10.2px;line-height:14px;color:#242424;transform:scaleX(0.8922);-webkit-text-stroke:0.04px #242424;">25.00</span>
<span class="t" style="left:896.55px;transform-origin:0 50%;top:325.25px;font-size:10.2px;line-height:14px;color:#242424;transform:scaleX(0.8250);-webkit-text-stroke:0.04px #242424;">USD</span>
<span class="t" style="right:822.25px;transform-origin:100% 50%;top:325.25px;font-size:10.2px;line-height:14px;color:#242424;transform:scaleX(0.8934);-webkit-text-stroke:0.04px #242424;">195.00</span>
<span class="t" style="left:1073.10px;transform-origin:0 50%;top:325.25px;font-size:10.2px;line-height:14px;color:#242424;transform:scaleX(0.9130);-webkit-text-stroke:0.04px #242424;">Billable</span>
<span class="t" style="left:1190.80px;transform-origin:0 50%;top:325.25px;font-size:10.2px;line-height:14px;color:#242424;transform:scaleX(0.9053);-webkit-text-stroke:0.04px #242424;">Chargeable</span>
<span class="t" style="left:1301.10px;transform-origin:0 50%;top:325.25px;font-size:10.2px;line-height:14px;color:#242424;transform:scaleX(0.9495);-webkit-text-stroke:0.04px #242424;">Hour journal</span>
<span class="t" style="left:249.80px;transform-origin:0 50%;top:344.25px;font-size:10.2px;line-height:14px;color:#242424;transform:scaleX(0.8552);-webkit-text-stroke:0.04px #242424;">ussi</span>
<span class="t" style="left:363.30px;transform-origin:0 50%;top:344.25px;font-size:10.2px;line-height:14px;color:#242424;transform:scaleX(0.9663);-webkit-text-stroke:0.04px #242424;">5/27/2025</span>
<span class="t" style="left:432.55px;transform-origin:0 50%;top:344.25px;font-size:10.2px;line-height:14px;color:#242424;transform:scaleX(0.8771);-webkit-text-stroke:0.04px #242424;">085698.01</span>
<span class="t" style="left:507.55px;transform-origin:0 50%;top:344.25px;font-size:10.2px;line-height:14px;color:#242424;transform:scaleX(0.9393);-webkit-text-stroke:0.04px #242424;">Demo-Design</span>
<span class="t" style="left:585.30px;transform-origin:0 50%;top:344.25px;font-size:10.2px;line-height:14px;color:#242424;transform:scaleX(0.9044);-webkit-text-stroke:0.04px #242424;">003388</span>
<span class="t" style="left:642.80px;transform-origin:0 50%;top:344.25px;font-size:10.2px;line-height:14px;color:#242424;transform:scaleX(0.8715);-webkit-text-stroke:0.04px #242424;">S Kundan</span>
<span class="t" style="left:714.05px;transform-origin:0 50%;top:344.25px;font-size:10.2px;line-height:14px;color:#242424;transform:scaleX(0.8955);-webkit-text-stroke:0.04px #242424;">Project...</span>
<span class="t" style="right:1096.5px;transform-origin:100% 50%;top:344.25px;font-size:10.2px;line-height:14px;color:#242424;transform:scaleX(0.8901);-webkit-text-stroke:0.04px #242424;">7.00</span>
<span class="t" style="right:999px;transform-origin:100% 50%;top:344.25px;font-size:10.2px;line-height:14px;color:#242424;transform:scaleX(0.8922);-webkit-text-stroke:0.04px #242424;">25.00</span>
<span class="t" style="left:896.55px;transform-origin:0 50%;top:344.25px;font-size:10.2px;line-height:14px;color:#242424;transform:scaleX(0.8250);-webkit-text-stroke:0.04px #242424;">USD</span>
<span class="t" style="right:822.25px;transform-origin:100% 50%;top:344.25px;font-size:10.2px;line-height:14px;color:#242424;transform:scaleX(0.8934);-webkit-text-stroke:0.04px #242424;">195.00</span>
<span class="t" style="left:1073.10px;transform-origin:0 50%;top:344.25px;font-size:10.2px;line-height:14px;color:#242424;transform:scaleX(0.9130);-webkit-text-stroke:0.04px #242424;">Billable</span>
<span class="t" style="left:1190.80px;transform-origin:0 50%;top:344.25px;font-size:10.2px;line-height:14px;color:#242424;transform:scaleX(0.9053);-webkit-text-stroke:0.04px #242424;">Chargeable</span>
<span class="t" style="left:1301.10px;transform-origin:0 50%;top:344.25px;font-size:10.2px;line-height:14px;color:#242424;transform:scaleX(0.9495);-webkit-text-stroke:0.04px #242424;">Hour journal</span>
<span class="t" style="left:249.80px;transform-origin:0 50%;top:363.25px;font-size:10.2px;line-height:14px;color:#242424;transform:scaleX(0.8552);-webkit-text-stroke:0.04px #242424;">ussi</span>
<span class="t" style="left:363.30px;transform-origin:0 50%;top:363.25px;font-size:10.2px;line-height:14px;color:#242424;transform:scaleX(0.9663);-webkit-text-stroke:0.04px #242424;">5/27/2025</span>
<span class="t" style="left:432.55px;transform-origin:0 50%;top:363.25px;font-size:10.2px;line-height:14px;color:#242424;transform:scaleX(0.8771);-webkit-text-stroke:0.04px #242424;">085698.01</span>
<span class="t" style="left:507.55px;transform-origin:0 50%;top:363.25px;font-size:10.2px;line-height:14px;color:#242424;transform:scaleX(0.7609);-webkit-text-stroke:0.04px #242424;">CR</span>
<span class="t" style="left:585.30px;transform-origin:0 50%;top:363.25px;font-size:10.2px;line-height:14px;color:#242424;transform:scaleX(0.9044);-webkit-text-stroke:0.04px #242424;">003388</span>
<span class="t" style="left:642.80px;transform-origin:0 50%;top:363.25px;font-size:10.2px;line-height:14px;color:#242424;transform:scaleX(0.8715);-webkit-text-stroke:0.04px #242424;">S Kundan</span>
<span class="t" style="left:714.05px;transform-origin:0 50%;top:363.25px;font-size:10.2px;line-height:14px;color:#242424;transform:scaleX(0.8955);-webkit-text-stroke:0.04px #242424;">Project...</span>
<span class="t" style="right:1096.5px;transform-origin:100% 50%;top:363.25px;font-size:10.2px;line-height:14px;color:#242424;transform:scaleX(0.8901);-webkit-text-stroke:0.04px #242424;">2.00</span>
<span class="t" style="right:999px;transform-origin:100% 50%;top:363.25px;font-size:10.2px;line-height:14px;color:#242424;transform:scaleX(0.8922);-webkit-text-stroke:0.04px #242424;">25.00</span>
<span class="t" style="left:896.55px;transform-origin:0 50%;top:363.25px;font-size:10.2px;line-height:14px;color:#242424;transform:scaleX(0.8250);-webkit-text-stroke:0.04px #242424;">USD</span>
<span class="t" style="right:822.25px;transform-origin:100% 50%;top:363.25px;font-size:10.2px;line-height:14px;color:#242424;transform:scaleX(0.8934);-webkit-text-stroke:0.04px #242424;">195.00</span>
<span class="t" style="left:1073.10px;transform-origin:0 50%;top:363.25px;font-size:10.2px;line-height:14px;color:#242424;transform:scaleX(0.9389);-webkit-text-stroke:0.04px #242424;">Demo-NB</span>
<span class="t" style="left:1190.80px;transform-origin:0 50%;top:363.25px;font-size:10.2px;line-height:14px;color:#242424;transform:scaleX(0.9304);-webkit-text-stroke:0.04px #242424;">Nonchargeable</span>
<span class="t" style="left:1301.10px;transform-origin:0 50%;top:363.25px;font-size:10.2px;line-height:14px;color:#242424;transform:scaleX(0.9495);-webkit-text-stroke:0.04px #242424;">Hour journal</span>
<span class="t" style="left:1451.80px;transform-origin:0 50%;top:363.25px;font-size:10.2px;line-height:14px;color:#242424;transform:scaleX(0.9231);-webkit-text-stroke:0.04px #242424;">Custom Address</span>
<span class="t" style="left:249.80px;transform-origin:0 50%;top:383.25px;font-size:10.2px;line-height:14px;color:#242424;transform:scaleX(0.8552);-webkit-text-stroke:0.04px #242424;">ussi</span>
<span class="t" style="left:363.30px;transform-origin:0 50%;top:383.25px;font-size:10.2px;line-height:14px;color:#242424;transform:scaleX(0.9663);-webkit-text-stroke:0.04px #242424;">5/27/2025</span>
<span class="t" style="left:432.55px;transform-origin:0 50%;top:383.25px;font-size:10.2px;line-height:14px;color:#242424;transform:scaleX(0.8771);-webkit-text-stroke:0.04px #242424;">085698.01</span>
<span class="t" style="left:507.55px;transform-origin:0 50%;top:383.25px;font-size:10.2px;line-height:14px;color:#242424;transform:scaleX(0.7609);-webkit-text-stroke:0.04px #242424;">CR</span>
<span class="t" style="left:585.30px;transform-origin:0 50%;top:383.25px;font-size:10.2px;line-height:14px;color:#242424;transform:scaleX(0.9044);-webkit-text-stroke:0.04px #242424;">003388</span>
<span class="t" style="left:642.80px;transform-origin:0 50%;top:383.25px;font-size:10.2px;line-height:14px;color:#242424;transform:scaleX(0.8715);-webkit-text-stroke:0.04px #242424;">S Kundan</span>
<span class="t" style="left:714.05px;transform-origin:0 50%;top:383.25px;font-size:10.2px;line-height:14px;color:#242424;transform:scaleX(0.8955);-webkit-text-stroke:0.04px #242424;">Project...</span>
<span class="t" style="right:1096.5px;transform-origin:100% 50%;top:383.25px;font-size:10.2px;line-height:14px;color:#242424;transform:scaleX(0.8901);-webkit-text-stroke:0.04px #242424;">2.00</span>
<span class="t" style="right:999px;transform-origin:100% 50%;top:383.25px;font-size:10.2px;line-height:14px;color:#242424;transform:scaleX(0.8922);-webkit-text-stroke:0.04px #242424;">25.00</span>
<span class="t" style="left:896.55px;transform-origin:0 50%;top:383.25px;font-size:10.2px;line-height:14px;color:#242424;transform:scaleX(0.8250);-webkit-text-stroke:0.04px #242424;">USD</span>
<span class="t" style="right:822.25px;transform-origin:100% 50%;top:383.25px;font-size:10.2px;line-height:14px;color:#242424;transform:scaleX(0.8934);-webkit-text-stroke:0.04px #242424;">195.00</span>
<span class="t" style="left:1073.10px;transform-origin:0 50%;top:383.25px;font-size:10.2px;line-height:14px;color:#242424;transform:scaleX(0.9389);-webkit-text-stroke:0.04px #242424;">Demo-NB</span>
<span class="t" style="left:1190.80px;transform-origin:0 50%;top:383.25px;font-size:10.2px;line-height:14px;color:#242424;transform:scaleX(0.9304);-webkit-text-stroke:0.04px #242424;">Nonchargeable</span>
<span class="t" style="left:1301.10px;transform-origin:0 50%;top:383.25px;font-size:10.2px;line-height:14px;color:#242424;transform:scaleX(0.9495);-webkit-text-stroke:0.04px #242424;">Hour journal</span>
<span class="t" style="left:249.80px;transform-origin:0 50%;top:402.25px;font-size:10.2px;line-height:14px;color:#242424;transform:scaleX(0.8552);-webkit-text-stroke:0.04px #242424;">ussi</span>
<span class="t" style="left:363.30px;transform-origin:0 50%;top:402.25px;font-size:10.2px;line-height:14px;color:#242424;transform:scaleX(0.9663);-webkit-text-stroke:0.04px #242424;">5/27/2025</span>
<span class="t" style="left:432.55px;transform-origin:0 50%;top:402.25px;font-size:10.2px;line-height:14px;color:#242424;transform:scaleX(0.8771);-webkit-text-stroke:0.04px #242424;">085698.01</span>
<span class="t" style="left:507.55px;transform-origin:0 50%;top:402.25px;font-size:10.2px;line-height:14px;color:#242424;transform:scaleX(0.9263);-webkit-text-stroke:0.04px #242424;">Consult</span>
<span class="t" style="left:585.30px;transform-origin:0 50%;top:402.25px;font-size:10.2px;line-height:14px;color:#242424;transform:scaleX(0.9044);-webkit-text-stroke:0.04px #242424;">003388</span>
<span class="t" style="left:642.80px;transform-origin:0 50%;top:402.25px;font-size:10.2px;line-height:14px;color:#242424;transform:scaleX(0.8715);-webkit-text-stroke:0.04px #242424;">S Kundan</span>
<span class="t" style="left:714.05px;transform-origin:0 50%;top:402.25px;font-size:10.2px;line-height:14px;color:#242424;transform:scaleX(0.8955);-webkit-text-stroke:0.04px #242424;">Project...</span>
<span class="t" style="right:1096.5px;transform-origin:100% 50%;top:402.25px;font-size:10.2px;line-height:14px;color:#242424;transform:scaleX(0.8901);-webkit-text-stroke:0.04px #242424;">3.00</span>
<span class="t" style="right:999px;transform-origin:100% 50%;top:402.25px;font-size:10.2px;line-height:14px;color:#242424;transform:scaleX(0.8922);-webkit-text-stroke:0.04px #242424;">25.00</span>
<span class="t" style="left:896.55px;transform-origin:0 50%;top:402.25px;font-size:10.2px;line-height:14px;color:#242424;transform:scaleX(0.8250);-webkit-text-stroke:0.04px #242424;">USD</span>
<span class="t" style="right:822.25px;transform-origin:100% 50%;top:402.25px;font-size:10.2px;line-height:14px;color:#242424;transform:scaleX(0.8934);-webkit-text-stroke:0.04px #242424;">600.00</span>
<span class="t" style="left:1073.10px;transform-origin:0 50%;top:402.25px;font-size:10.2px;line-height:14px;color:#242424;transform:scaleX(0.9386);-webkit-text-stroke:0.04px #242424;">NonBill</span>
<span class="t" style="left:1190.80px;transform-origin:0 50%;top:402.25px;font-size:10.2px;line-height:14px;color:#242424;transform:scaleX(0.9304);-webkit-text-stroke:0.04px #242424;">Nonchargeable</span>
<span class="t" style="left:1301.10px;transform-origin:0 50%;top:402.25px;font-size:10.2px;line-height:14px;color:#242424;transform:scaleX(0.9495);-webkit-text-stroke:0.04px #242424;">Hour journal</span>
<span class="t" style="left:249.80px;transform-origin:0 50%;top:421.25px;font-size:10.2px;line-height:14px;color:#242424;transform:scaleX(0.8552);-webkit-text-stroke:0.04px #242424;">ussi</span>
<span class="t" style="left:363.30px;transform-origin:0 50%;top:421.25px;font-size:10.2px;line-height:14px;color:#242424;transform:scaleX(0.9663);-webkit-text-stroke:0.04px #242424;">5/27/2025</span>
<span class="t" style="left:432.55px;transform-origin:0 50%;top:421.25px;font-size:10.2px;line-height:14px;color:#242424;transform:scaleX(0.8771);-webkit-text-stroke:0.04px #242424;">085698.01</span>
<span class="t" style="left:507.55px;transform-origin:0 50%;top:421.25px;font-size:10.2px;line-height:14px;color:#242424;transform:scaleX(0.9263);-webkit-text-stroke:0.04px #242424;">Consult</span>
<span class="t" style="left:585.30px;transform-origin:0 50%;top:421.25px;font-size:10.2px;line-height:14px;color:#242424;transform:scaleX(0.9044);-webkit-text-stroke:0.04px #242424;">003388</span>
<span class="t" style="left:642.80px;transform-origin:0 50%;top:421.25px;font-size:10.2px;line-height:14px;color:#242424;transform:scaleX(0.8715);-webkit-text-stroke:0.04px #242424;">S Kundan</span>
<span class="t" style="left:714.05px;transform-origin:0 50%;top:421.25px;font-size:10.2px;line-height:14px;color:#242424;transform:scaleX(0.8955);-webkit-text-stroke:0.04px #242424;">Project...</span>
<span class="t" style="right:1096.5px;transform-origin:100% 50%;top:421.25px;font-size:10.2px;line-height:14px;color:#242424;transform:scaleX(0.8922);-webkit-text-stroke:0.04px #242424;">40.00</span>
<span class="t" style="right:999px;transform-origin:100% 50%;top:421.25px;font-size:10.2px;line-height:14px;color:#242424;transform:scaleX(0.8922);-webkit-text-stroke:0.04px #242424;">25.00</span>
<span class="t" style="left:896.55px;transform-origin:0 50%;top:421.25px;font-size:10.2px;line-height:14px;color:#242424;transform:scaleX(0.8250);-webkit-text-stroke:0.04px #242424;">USD</span>
<span class="t" style="right:822.25px;transform-origin:100% 50%;top:421.25px;font-size:10.2px;line-height:14px;color:#242424;transform:scaleX(0.8934);-webkit-text-stroke:0.04px #242424;">600.00</span>
<span class="t" style="left:1073.10px;transform-origin:0 50%;top:421.25px;font-size:10.2px;line-height:14px;color:#242424;transform:scaleX(0.9130);-webkit-text-stroke:0.04px #242424;">Billable</span>
<span class="t" style="left:1190.80px;transform-origin:0 50%;top:421.25px;font-size:10.2px;line-height:14px;color:#242424;transform:scaleX(0.9053);-webkit-text-stroke:0.04px #242424;">Chargeable</span>
<span class="t" style="left:1301.10px;transform-origin:0 50%;top:421.25px;font-size:10.2px;line-height:14px;color:#242424;transform:scaleX(0.9495);-webkit-text-stroke:0.04px #242424;">Hour journal</span>
<span class="t" style="left:249.80px;transform-origin:0 50%;top:440.25px;font-size:10.2px;line-height:14px;color:#242424;transform:scaleX(0.8552);-webkit-text-stroke:0.04px #242424;">ussi</span>
<span class="t" style="left:363.30px;transform-origin:0 50%;top:440.25px;font-size:10.2px;line-height:14px;color:#242424;transform:scaleX(0.9663);-webkit-text-stroke:0.04px #242424;">5/27/2025</span>
<span class="t" style="left:432.55px;transform-origin:0 50%;top:440.25px;font-size:10.2px;line-height:14px;color:#242424;transform:scaleX(0.8958);-webkit-text-stroke:0.04px #242424;">085698.02</span>
<span class="t" style="left:507.55px;transform-origin:0 50%;top:440.25px;font-size:10.2px;line-height:14px;color:#242424;transform:scaleX(0.9442);-webkit-text-stroke:0.04px #242424;">Apprentice</span>
<span class="t" style="left:585.30px;transform-origin:0 50%;top:440.25px;font-size:10.2px;line-height:14px;color:#242424;transform:scaleX(0.9044);-webkit-text-stroke:0.04px #242424;">003388</span>
<span class="t" style="left:642.80px;transform-origin:0 50%;top:440.25px;font-size:10.2px;line-height:14px;color:#242424;transform:scaleX(0.8715);-webkit-text-stroke:0.04px #242424;">S Kundan</span>
<span class="t" style="left:714.05px;transform-origin:0 50%;top:440.25px;font-size:10.2px;line-height:14px;color:#242424;transform:scaleX(0.8955);-webkit-text-stroke:0.04px #242424;">Project...</span>
<span class="t" style="right:1096.5px;transform-origin:100% 50%;top:440.25px;font-size:10.2px;line-height:14px;color:#242424;transform:scaleX(0.8922);-webkit-text-stroke:0.04px #242424;">40.00</span>
<span class="t" style="right:999px;transform-origin:100% 50%;top:440.25px;font-size:10.2px;line-height:14px;color:#242424;transform:scaleX(0.8922);-webkit-text-stroke:0.04px #242424;">25.00</span>
<span class="t" style="left:896.55px;transform-origin:0 50%;top:440.25px;font-size:10.2px;line-height:14px;color:#242424;transform:scaleX(0.8250);-webkit-text-stroke:0.04px #242424;">USD</span>
<span class="t" style="right:822.25px;transform-origin:100% 50%;top:440.25px;font-size:10.2px;line-height:14px;color:#242424;transform:scaleX(0.8922);-webkit-text-stroke:0.04px #242424;">20.00</span>
<span class="t" style="left:1073.10px;transform-origin:0 50%;top:440.25px;font-size:10.2px;line-height:14px;color:#242424;transform:scaleX(0.9130);-webkit-text-stroke:0.04px #242424;">Billable</span>
<span class="t" style="left:1190.80px;transform-origin:0 50%;top:440.25px;font-size:10.2px;line-height:14px;color:#242424;transform:scaleX(0.9053);-webkit-text-stroke:0.04px #242424;">Chargeable</span>
<span class="t" style="left:1301.10px;transform-origin:0 50%;top:440.25px;font-size:10.2px;line-height:14px;color:#242424;transform:scaleX(0.9495);-webkit-text-stroke:0.04px #242424;">Hour journal</span>
<span class="t" style="left:249.80px;transform-origin:0 50%;top:459.25px;font-size:10.2px;line-height:14px;color:#242424;transform:scaleX(0.8552);-webkit-text-stroke:0.04px #242424;">ussi</span>
<span class="t" style="left:363.30px;transform-origin:0 50%;top:459.25px;font-size:10.2px;line-height:14px;color:#242424;transform:scaleX(0.9663);-webkit-text-stroke:0.04px #242424;">5/27/2025</span>
<span class="t" style="left:432.55px;transform-origin:0 50%;top:459.25px;font-size:10.2px;line-height:14px;color:#242424;transform:scaleX(0.8958);-webkit-text-stroke:0.04px #242424;">085698.02</span>
<span class="t" style="left:507.55px;transform-origin:0 50%;top:459.25px;font-size:10.2px;line-height:14px;color:#242424;transform:scaleX(0.9393);-webkit-text-stroke:0.04px #242424;">Demo-Design</span>
<span class="t" style="left:585.30px;transform-origin:0 50%;top:459.25px;font-size:10.2px;line-height:14px;color:#242424;transform:scaleX(0.9044);-webkit-text-stroke:0.04px #242424;">003388</span>
<span class="t" style="left:642.80px;transform-origin:0 50%;top:459.25px;font-size:10.2px;line-height:14px;color:#242424;transform:scaleX(0.8715);-webkit-text-stroke:0.04px #242424;">S Kundan</span>
<span class="t" style="left:714.05px;transform-origin:0 50%;top:459.25px;font-size:10.2px;line-height:14px;color:#242424;transform:scaleX(0.8955);-webkit-text-stroke:0.04px #242424;">Project...</span>
<span class="t" style="right:1096.5px;transform-origin:100% 50%;top:459.25px;font-size:10.2px;line-height:14px;color:#242424;transform:scaleX(0.8922);-webkit-text-stroke:0.04px #242424;">10.00</span>
<span class="t" style="right:999px;transform-origin:100% 50%;top:459.25px;font-size:10.2px;line-height:14px;color:#242424;transform:scaleX(0.8922);-webkit-text-stroke:0.04px #242424;">25.00</span>
<span class="t" style="left:896.55px;transform-origin:0 50%;top:459.25px;font-size:10.2px;line-height:14px;color:#242424;transform:scaleX(0.8250);-webkit-text-stroke:0.04px #242424;">USD</span>
<span class="t" style="right:822.25px;transform-origin:100% 50%;top:459.25px;font-size:10.2px;line-height:14px;color:#242424;transform:scaleX(0.8922);-webkit-text-stroke:0.04px #242424;">20.00</span>
<span class="t" style="left:1073.10px;transform-origin:0 50%;top:459.25px;font-size:10.2px;line-height:14px;color:#242424;transform:scaleX(0.9130);-webkit-text-stroke:0.04px #242424;">Billable</span>
<span class="t" style="left:1190.80px;transform-origin:0 50%;top:459.25px;font-size:10.2px;line-height:14px;color:#242424;transform:scaleX(0.9053);-webkit-text-stroke:0.04px #242424;">Chargeable</span>
<span class="t" style="left:1301.10px;transform-origin:0 50%;top:459.25px;font-size:10.2px;line-height:14px;color:#242424;transform:scaleX(0.9495);-webkit-text-stroke:0.04px #242424;">Hour journal</span>
<span class="t" style="left:249.80px;transform-origin:0 50%;top:479.25px;font-size:10.2px;line-height:14px;color:#242424;transform:scaleX(0.8552);-webkit-text-stroke:0.04px #242424;">ussi</span>
<span class="t" style="left:363.30px;transform-origin:0 50%;top:479.25px;font-size:10.2px;line-height:14px;color:#242424;transform:scaleX(0.9663);-webkit-text-stroke:0.04px #242424;">5/27/2025</span>
<span class="t" style="left:432.55px;transform-origin:0 50%;top:479.25px;font-size:10.2px;line-height:14px;color:#242424;transform:scaleX(0.8958);-webkit-text-stroke:0.04px #242424;">085698.02</span>
<span class="t" style="left:507.55px;transform-origin:0 50%;top:479.25px;font-size:10.2px;line-height:14px;color:#242424;transform:scaleX(0.9393);-webkit-text-stroke:0.04px #242424;">Demo-Design</span>
<span class="t" style="left:585.30px;transform-origin:0 50%;top:479.25px;font-size:10.2px;line-height:14px;color:#242424;transform:scaleX(0.9044);-webkit-text-stroke:0.04px #242424;">003388</span>
<span class="t" style="left:642.80px;transform-origin:0 50%;top:479.25px;font-size:10.2px;line-height:14px;color:#242424;transform:scaleX(0.8715);-webkit-text-stroke:0.04px #242424;">S Kundan</span>
<span class="t" style="left:714.05px;transform-origin:0 50%;top:479.25px;font-size:10.2px;line-height:14px;color:#242424;transform:scaleX(0.8955);-webkit-text-stroke:0.04px #242424;">Project...</span>
<span class="t" style="right:1096.5px;transform-origin:100% 50%;top:479.25px;font-size:10.2px;line-height:14px;color:#242424;transform:scaleX(0.8901);-webkit-text-stroke:0.04px #242424;">5.00</span>
<span class="t" style="right:999px;transform-origin:100% 50%;top:479.25px;font-size:10.2px;line-height:14px;color:#242424;transform:scaleX(0.8922);-webkit-text-stroke:0.04px #242424;">25.00</span>
<span class="t" style="left:896.55px;transform-origin:0 50%;top:479.25px;font-size:10.2px;line-height:14px;color:#242424;transform:scaleX(0.8250);-webkit-text-stroke:0.04px #242424;">USD</span>
<span class="t" style="right:822.25px;transform-origin:100% 50%;top:479.25px;font-size:10.2px;line-height:14px;color:#242424;transform:scaleX(0.8922);-webkit-text-stroke:0.04px #242424;">20.00</span>
<span class="t" style="left:1073.10px;transform-origin:0 50%;top:479.25px;font-size:10.2px;line-height:14px;color:#242424;transform:scaleX(0.9389);-webkit-text-stroke:0.04px #242424;">Demo-NB</span>
<span class="t" style="left:1190.80px;transform-origin:0 50%;top:479.25px;font-size:10.2px;line-height:14px;color:#242424;transform:scaleX(0.9304);-webkit-text-stroke:0.04px #242424;">Nonchargeable</span>
<span class="t" style="left:1301.10px;transform-origin:0 50%;top:479.25px;font-size:10.2px;line-height:14px;color:#242424;transform:scaleX(0.9495);-webkit-text-stroke:0.04px #242424;">Hour journal</span>
<span class="t" style="left:249.80px;transform-origin:0 50%;top:498.25px;font-size:10.2px;line-height:14px;color:#242424;transform:scaleX(0.8552);-webkit-text-stroke:0.04px #242424;">ussi</span>
<span class="t" style="left:363.30px;transform-origin:0 50%;top:498.25px;font-size:10.2px;line-height:14px;color:#242424;transform:scaleX(0.9663);-webkit-text-stroke:0.04px #242424;">5/27/2025</span>
<span class="t" style="left:432.55px;transform-origin:0 50%;top:498.25px;font-size:10.2px;line-height:14px;color:#242424;transform:scaleX(0.8958);-webkit-text-stroke:0.04px #242424;">085698.02</span>
<span class="t" style="left:507.55px;transform-origin:0 50%;top:498.25px;font-size:10.2px;line-height:14px;color:#242424;transform:scaleX(0.9393);-webkit-text-stroke:0.04px #242424;">Demo-Design</span>
<span class="t" style="left:585.30px;transform-origin:0 50%;top:498.25px;font-size:10.2px;line-height:14px;color:#242424;transform:scaleX(0.9044);-webkit-text-stroke:0.04px #242424;">003388</span>
<span class="t" style="left:642.80px;transform-origin:0 50%;top:498.25px;font-size:10.2px;line-height:14px;color:#242424;transform:scaleX(0.8715);-webkit-text-stroke:0.04px #242424;">S Kundan</span>
<span class="t" style="left:714.05px;transform-origin:0 50%;top:498.25px;font-size:10.2px;line-height:14px;color:#242424;transform:scaleX(0.8955);-webkit-text-stroke:0.04px #242424;">Project...</span>
<span class="t" style="right:1096.5px;transform-origin:100% 50%;top:498.25px;font-size:10.2px;line-height:14px;color:#242424;transform:scaleX(0.8901);-webkit-text-stroke:0.04px #242424;">5.00</span>
<span class="t" style="right:999px;transform-origin:100% 50%;top:498.25px;font-size:10.2px;line-height:14px;color:#242424;transform:scaleX(0.8922);-webkit-text-stroke:0.04px #242424;">25.00</span>
<span class="t" style="left:896.55px;transform-origin:0 50%;top:498.25px;font-size:10.2px;line-height:14px;color:#242424;transform:scaleX(0.8250);-webkit-text-stroke:0.04px #242424;">USD</span>
<span class="t" style="right:822.25px;transform-origin:100% 50%;top:498.25px;font-size:10.2px;line-height:14px;color:#242424;transform:scaleX(0.8922);-webkit-text-stroke:0.04px #242424;">20.00</span>
<span class="t" style="left:1073.10px;transform-origin:0 50%;top:498.25px;font-size:10.2px;line-height:14px;color:#242424;transform:scaleX(0.9389);-webkit-text-stroke:0.04px #242424;">Demo-NB</span>
<span class="t" style="left:1190.80px;transform-origin:0 50%;top:498.25px;font-size:10.2px;line-height:14px;color:#242424;transform:scaleX(0.9304);-webkit-text-stroke:0.04px #242424;">Nonchargeable</span>
<span class="t" style="left:1301.10px;transform-origin:0 50%;top:498.25px;font-size:10.2px;line-height:14px;color:#242424;transform:scaleX(0.9495);-webkit-text-stroke:0.04px #242424;">Hour journal</span>
<span class="t" style="left:249.80px;transform-origin:0 50%;top:517.25px;font-size:10.2px;line-height:14px;color:#242424;transform:scaleX(0.8552);-webkit-text-stroke:0.04px #242424;">ussi</span>
<span class="t" style="left:363.30px;transform-origin:0 50%;top:517.25px;font-size:10.2px;line-height:14px;color:#242424;transform:scaleX(0.9663);-webkit-text-stroke:0.04px #242424;">5/27/2025</span>
<span class="t" style="left:432.55px;transform-origin:0 50%;top:517.25px;font-size:10.2px;line-height:14px;color:#242424;transform:scaleX(0.8958);-webkit-text-stroke:0.04px #242424;">085698.03</span>
<span class="t" style="left:507.55px;transform-origin:0 50%;top:517.25px;font-size:10.2px;line-height:14px;color:#242424;transform:scaleX(0.9393);-webkit-text-stroke:0.04px #242424;">Demo-Design</span>
<span class="t" style="left:585.30px;transform-origin:0 50%;top:517.25px;font-size:10.2px;line-height:14px;color:#242424;transform:scaleX(0.9044);-webkit-text-stroke:0.04px #242424;">003388</span>
<span class="t" style="left:642.80px;transform-origin:0 50%;top:517.25px;font-size:10.2px;line-height:14px;color:#242424;transform:scaleX(0.8715);-webkit-text-stroke:0.04px #242424;">S Kundan</span>
<span class="t" style="left:714.05px;transform-origin:0 50%;top:517.25px;font-size:10.2px;line-height:14px;color:#242424;transform:scaleX(0.8955);-webkit-text-stroke:0.04px #242424;">Project...</span>
<span class="t" style="right:1096.5px;transform-origin:100% 50%;top:517.25px;font-size:10.2px;line-height:14px;color:#242424;transform:scaleX(0.8901);-webkit-text-stroke:0.04px #242424;">2.00</span>
<span class="t" style="right:999px;transform-origin:100% 50%;top:517.25px;font-size:10.2px;line-height:14px;color:#242424;transform:scaleX(0.8922);-webkit-text-stroke:0.04px #242424;">25.00</span>
<span class="t" style="left:896.55px;transform-origin:0 50%;top:517.25px;font-size:10.2px;line-height:14px;color:#242424;transform:scaleX(0.8250);-webkit-text-stroke:0.04px #242424;">USD</span>
<span class="t" style="right:822.25px;transform-origin:100% 50%;top:517.25px;font-size:10.2px;line-height:14px;color:#242424;transform:scaleX(0.8934);-webkit-text-stroke:0.04px #242424;">195.00</span>
<span class="t" style="left:1073.10px;transform-origin:0 50%;top:517.25px;font-size:10.2px;line-height:14px;color:#242424;transform:scaleX(0.9130);-webkit-text-stroke:0.04px #242424;">Billable</span>
<span class="t" style="left:1190.80px;transform-origin:0 50%;top:517.25px;font-size:10.2px;line-height:14px;color:#242424;transform:scaleX(0.9053);-webkit-text-stroke:0.04px #242424;">Chargeable</span>
<span class="t" style="left:1301.10px;transform-origin:0 50%;top:517.25px;font-size:10.2px;line-height:14px;color:#242424;transform:scaleX(0.9495);-webkit-text-stroke:0.04px #242424;">Hour journal</span>
<span class="t" style="left:249.80px;transform-origin:0 50%;top:536.25px;font-size:10.2px;line-height:14px;color:#242424;transform:scaleX(0.8552);-webkit-text-stroke:0.04px #242424;">ussi</span>
<span class="t" style="left:363.30px;transform-origin:0 50%;top:536.25px;font-size:10.2px;line-height:14px;color:#242424;transform:scaleX(0.9663);-webkit-text-stroke:0.04px #242424;">5/27/2025</span>
<span class="t" style="left:432.55px;transform-origin:0 50%;top:536.25px;font-size:10.2px;line-height:14px;color:#242424;transform:scaleX(0.8958);-webkit-text-stroke:0.04px #242424;">085698.03</span>
<span class="t" style="left:507.55px;transform-origin:0 50%;top:536.25px;font-size:10.2px;line-height:14px;color:#242424;transform:scaleX(0.9393);-webkit-text-stroke:0.04px #242424;">Demo-Design</span>
<span class="t" style="left:585.30px;transform-origin:0 50%;top:536.25px;font-size:10.2px;line-height:14px;color:#242424;transform:scaleX(0.9044);-webkit-text-stroke:0.04px #242424;">003388</span>
<span class="t" style="left:642.80px;transform-origin:0 50%;top:536.25px;font-size:10.2px;line-height:14px;color:#242424;transform:scaleX(0.8715);-webkit-text-stroke:0.04px #242424;">S Kundan</span>
<span class="t" style="left:714.05px;transform-origin:0 50%;top:536.25px;font-size:10.2px;line-height:14px;color:#242424;transform:scaleX(0.8955);-webkit-text-stroke:0.04px #242424;">Project...</span>
<span class="t" style="right:1096.5px;transform-origin:100% 50%;top:536.25px;font-size:10.2px;line-height:14px;color:#242424;transform:scaleX(0.8901);-webkit-text-stroke:0.04px #242424;">0.50</span>
<span class="t" style="right:999px;transform-origin:100% 50%;top:536.25px;font-size:10.2px;line-height:14px;color:#242424;transform:scaleX(0.8922);-webkit-text-stroke:0.04px #242424;">25.00</span>
<span class="t" style="left:896.55px;transform-origin:0 50%;top:536.25px;font-size:10.2px;line-height:14px;color:#242424;transform:scaleX(0.8250);-webkit-text-stroke:0.04px #242424;">USD</span>
<span class="t" style="right:822.25px;transform-origin:100% 50%;top:536.25px;font-size:10.2px;line-height:14px;color:#242424;transform:scaleX(0.8934);-webkit-text-stroke:0.04px #242424;">195.00</span>
<span class="t" style="left:1073.10px;transform-origin:0 50%;top:536.25px;font-size:10.2px;line-height:14px;color:#242424;transform:scaleX(0.9130);-webkit-text-stroke:0.04px #242424;">Billable</span>
<span class="t" style="left:1190.80px;transform-origin:0 50%;top:536.25px;font-size:10.2px;line-height:14px;color:#242424;transform:scaleX(0.9053);-webkit-text-stroke:0.04px #242424;">Chargeable</span>
<span class="t" style="left:1301.10px;transform-origin:0 50%;top:536.25px;font-size:10.2px;line-height:14px;color:#242424;transform:scaleX(0.9495);-webkit-text-stroke:0.04px #242424;">Hour journal</span>
<span class="t" style="left:249.80px;transform-origin:0 50%;top:555.25px;font-size:10.2px;line-height:14px;color:#242424;transform:scaleX(0.8552);-webkit-text-stroke:0.04px #242424;">ussi</span>
<span class="t" style="left:363.30px;transform-origin:0 50%;top:555.25px;font-size:10.2px;line-height:14px;color:#242424;transform:scaleX(0.9663);-webkit-text-stroke:0.04px #242424;">5/27/2025</span>
<span class="t" style="left:432.55px;transform-origin:0 50%;top:555.25px;font-size:10.2px;line-height:14px;color:#242424;transform:scaleX(0.8958);-webkit-text-stroke:0.04px #242424;">085698.04</span>
<span class="t" style="left:507.55px;transform-origin:0 50%;top:555.25px;font-size:10.2px;line-height:14px;color:#242424;transform:scaleX(0.9393);-webkit-text-stroke:0.04px #242424;">Demo-Design</span>
<span class="t" style="left:585.30px;transform-origin:0 50%;top:555.25px;font-size:10.2px;line-height:14px;color:#242424;transform:scaleX(0.9044);-webkit-text-stroke:0.04px #242424;">003388</span>
<span class="t" style="left:642.80px;transform-origin:0 50%;top:555.25px;font-size:10.2px;line-height:14px;color:#242424;transform:scaleX(0.8715);-webkit-text-stroke:0.04px #242424;">S Kundan</span>
<span class="t" style="left:714.05px;transform-origin:0 50%;top:555.25px;font-size:10.2px;line-height:14px;color:#242424;transform:scaleX(0.8955);-webkit-text-stroke:0.04px #242424;">Project...</span>
<span class="t" style="right:1096.5px;transform-origin:100% 50%;top:555.25px;font-size:10.2px;line-height:14px;color:#242424;transform:scaleX(0.8922);-webkit-text-stroke:0.04px #242424;">30.00</span>
<span class="t" style="right:999px;transform-origin:100% 50%;top:555.25px;font-size:10.2px;line-height:14px;color:#242424;transform:scaleX(0.8922);-webkit-text-stroke:0.04px #242424;">25.00</span>
<span class="t" style="left:896.55px;transform-origin:0 50%;top:555.25px;font-size:10.2px;line-height:14px;color:#242424;transform:scaleX(0.8250);-webkit-text-stroke:0.04px #242424;">USD</span>
<span class="t" style="right:822.25px;transform-origin:100% 50%;top:555.25px;font-size:10.2px;line-height:14px;color:#242424;transform:scaleX(0.8934);-webkit-text-stroke:0.04px #242424;">195.00</span>
<span class="t" style="left:1073.10px;transform-origin:0 50%;top:555.25px;font-size:10.2px;line-height:14px;color:#242424;transform:scaleX(0.9130);-webkit-text-stroke:0.04px #242424;">Billable</span>
<span class="t" style="left:1190.80px;transform-origin:0 50%;top:555.25px;font-size:10.2px;line-height:14px;color:#242424;transform:scaleX(0.9053);-webkit-text-stroke:0.04px #242424;">Chargeable</span>
<span class="t" style="left:1301.10px;transform-origin:0 50%;top:555.25px;font-size:10.2px;line-height:14px;color:#242424;transform:scaleX(0.9495);-webkit-text-stroke:0.04px #242424;">Hour journal</span>
<span class="t" style="left:249.80px;transform-origin:0 50%;top:575.25px;font-size:10.2px;line-height:14px;color:#2562d8;transform:scaleX(0.8552);-webkit-text-stroke:0.04px #2562d8;">ussi</span>
<span class="t" style="left:363.30px;transform-origin:0 50%;top:575.25px;font-size:10.2px;line-height:14px;color:#242424;transform:scaleX(0.9759);-webkit-text-stroke:0.04px #242424;">6/2/2025</span>
<span class="t" style="left:432.55px;transform-origin:0 50%;top:575.25px;font-size:10.2px;line-height:14px;color:#2562d8;transform:scaleX(0.8958);-webkit-text-stroke:0.04px #2562d8;">085698.03</span>
<span class="t" style="left:507.55px;transform-origin:0 50%;top:575.25px;font-size:10.2px;line-height:14px;color:#2562d8;transform:scaleX(0.9393);-webkit-text-stroke:0.04px #2562d8;">Demo-Design</span>
<span class="t" style="left:585.30px;transform-origin:0 50%;top:575.25px;font-size:10.2px;line-height:14px;color:#2562d8;transform:scaleX(0.9044);-webkit-text-stroke:0.04px #2562d8;">003388</span>
<span class="t" style="left:642.80px;transform-origin:0 50%;top:575.25px;font-size:10.2px;line-height:14px;color:#2562d8;transform:scaleX(0.8715);-webkit-text-stroke:0.04px #2562d8;">S Kundan</span>
<span class="t" style="left:714.05px;transform-origin:0 50%;top:575.25px;font-size:10.2px;line-height:14px;color:#2562d8;transform:scaleX(0.8955);-webkit-text-stroke:0.04px #2562d8;">Project...</span>
<span class="t" style="right:1096.5px;transform-origin:100% 50%;top:575.25px;font-size:10.2px;line-height:14px;color:#242424;transform:scaleX(0.8901);-webkit-text-stroke:0.04px #242424;">8.00</span>
<span class="t" style="right:999px;transform-origin:100% 50%;top:575.25px;font-size:10.2px;line-height:14px;color:#242424;transform:scaleX(0.8922);-webkit-text-stroke:0.04px #242424;">25.00</span>
<span class="t" style="left:896.55px;transform-origin:0 50%;top:575.25px;font-size:10.2px;line-height:14px;color:#2562d8;transform:scaleX(0.8250);-webkit-text-stroke:0.04px #2562d8;text-decoration:underline;">USD</span>
<span class="t" style="right:822.25px;transform-origin:100% 50%;top:575.25px;font-size:10.2px;line-height:14px;color:#242424;transform:scaleX(0.8934);-webkit-text-stroke:0.04px #242424;">195.00</span>
<span class="t" style="left:1073.10px;transform-origin:0 50%;top:575.25px;font-size:10.2px;line-height:14px;color:#2562d8;transform:scaleX(0.9130);-webkit-text-stroke:0.04px #2562d8;">Billable</span>
<span class="t" style="left:1190.80px;transform-origin:0 50%;top:575.25px;font-size:10.2px;line-height:14px;color:#242424;transform:scaleX(0.9053);-webkit-text-stroke:0.04px #242424;">Chargeable</span>
<span class="t" style="left:1301.10px;transform-origin:0 50%;top:575.25px;font-size:10.2px;line-height:14px;color:#242424;transform:scaleX(0.9113);-webkit-text-stroke:0.04px #242424;">Timesheet</span>
<span class="t" style="left:249.80px;transform-origin:0 50%;top:594.25px;font-size:10.2px;line-height:14px;color:#242424;transform:scaleX(0.8552);-webkit-text-stroke:0.04px #242424;">ussi</span>
<span class="t" style="left:363.30px;transform-origin:0 50%;top:594.25px;font-size:10.2px;line-height:14px;color:#242424;transform:scaleX(0.9759);-webkit-text-stroke:0.04px #242424;">6/3/2025</span>
<span class="t" style="left:432.55px;transform-origin:0 50%;top:594.25px;font-size:10.2px;line-height:14px;color:#242424;transform:scaleX(0.8958);-webkit-text-stroke:0.04px #242424;">085698.03</span>
<span class="t" style="left:507.55px;transform-origin:0 50%;top:594.25px;font-size:10.2px;line-height:14px;color:#242424;transform:scaleX(0.9393);-webkit-text-stroke:0.04px #242424;">Demo-Design</span>
<span class="t" style="left:585.30px;transform-origin:0 50%;top:594.25px;font-size:10.2px;line-height:14px;color:#242424;transform:scaleX(0.9044);-webkit-text-stroke:0.04px #242424;">003388</span>
<span class="t" style="left:642.80px;transform-origin:0 50%;top:594.25px;font-size:10.2px;line-height:14px;color:#242424;transform:scaleX(0.8715);-webkit-text-stroke:0.04px #242424;">S Kundan</span>
<span class="t" style="left:714.05px;transform-origin:0 50%;top:594.25px;font-size:10.2px;line-height:14px;color:#242424;transform:scaleX(0.8955);-webkit-text-stroke:0.04px #242424;">Project...</span>
<span class="t" style="right:1096.5px;transform-origin:100% 50%;top:594.25px;font-size:10.2px;line-height:14px;color:#242424;transform:scaleX(0.8901);-webkit-text-stroke:0.04px #242424;">8.00</span>
<span class="t" style="right:999px;transform-origin:100% 50%;top:594.25px;font-size:10.2px;line-height:14px;color:#242424;transform:scaleX(0.8922);-webkit-text-stroke:0.04px #242424;">25.00</span>
<span class="t" style="left:896.55px;transform-origin:0 50%;top:594.25px;font-size:10.2px;line-height:14px;color:#242424;transform:scaleX(0.8250);-webkit-text-stroke:0.04px #242424;">USD</span>
<span class="t" style="right:822.25px;transform-origin:100% 50%;top:594.25px;font-size:10.2px;line-height:14px;color:#242424;transform:scaleX(0.8934);-webkit-text-stroke:0.04px #242424;">195.00</span>
<span class="t" style="left:1073.10px;transform-origin:0 50%;top:594.25px;font-size:10.2px;line-height:14px;color:#242424;transform:scaleX(0.9130);-webkit-text-stroke:0.04px #242424;">Billable</span>
<span class="t" style="left:1190.80px;transform-origin:0 50%;top:594.25px;font-size:10.2px;line-height:14px;color:#242424;transform:scaleX(0.9053);-webkit-text-stroke:0.04px #242424;">Chargeable</span>
<span class="t" style="left:1301.10px;transform-origin:0 50%;top:594.25px;font-size:10.2px;line-height:14px;color:#242424;transform:scaleX(0.9113);-webkit-text-stroke:0.04px #242424;">Timesheet</span>
<span class="t" style="left:249.80px;transform-origin:0 50%;top:613.25px;font-size:10.2px;line-height:14px;color:#242424;transform:scaleX(0.8552);-webkit-text-stroke:0.04px #242424;">ussi</span>
<span class="t" style="left:363.30px;transform-origin:0 50%;top:613.25px;font-size:10.2px;line-height:14px;color:#242424;transform:scaleX(0.9759);-webkit-text-stroke:0.04px #242424;">6/4/2025</span>
<span class="t" style="left:432.55px;transform-origin:0 50%;top:613.25px;font-size:10.2px;line-height:14px;color:#242424;transform:scaleX(0.8771);-webkit-text-stroke:0.04px #242424;">085698.01</span>
<span class="t" style="left:507.55px;transform-origin:0 50%;top:613.25px;font-size:10.2px;line-height:14px;color:#242424;transform:scaleX(0.9118);-webkit-text-stroke:0.04px #242424;">001</span>
<span class="t" style="left:585.30px;transform-origin:0 50%;top:613.25px;font-size:10.2px;line-height:14px;color:#242424;transform:scaleX(0.9044);-webkit-text-stroke:0.04px #242424;">003388</span>
<span class="t" style="left:642.80px;transform-origin:0 50%;top:613.25px;font-size:10.2px;line-height:14px;color:#242424;transform:scaleX(0.8715);-webkit-text-stroke:0.04px #242424;">S Kundan</span>
<span class="t" style="left:714.05px;transform-origin:0 50%;top:613.25px;font-size:10.2px;line-height:14px;color:#242424;transform:scaleX(0.8955);-webkit-text-stroke:0.04px #242424;">Project...</span>
<span class="t" style="right:1096.5px;transform-origin:100% 50%;top:613.25px;font-size:10.2px;line-height:14px;color:#242424;transform:scaleX(0.8901);-webkit-text-stroke:0.04px #242424;">2.50</span>
<span class="t" style="right:999px;transform-origin:100% 50%;top:613.25px;font-size:10.2px;line-height:14px;color:#242424;transform:scaleX(0.8922);-webkit-text-stroke:0.04px #242424;">25.00</span>
<span class="t" style="left:896.55px;transform-origin:0 50%;top:613.25px;font-size:10.2px;line-height:14px;color:#242424;transform:scaleX(0.8250);-webkit-text-stroke:0.04px #242424;">USD</span>
<span class="t" style="right:822.25px;transform-origin:100% 50%;top:613.25px;font-size:10.2px;line-height:14px;color:#242424;transform:scaleX(0.8934);-webkit-text-stroke:0.04px #242424;">222.00</span>
<span class="t" style="left:1073.10px;transform-origin:0 50%;top:613.25px;font-size:10.2px;line-height:14px;color:#242424;transform:scaleX(0.9130);-webkit-text-stroke:0.04px #242424;">Billable</span>
<span class="t" style="left:1190.80px;transform-origin:0 50%;top:613.25px;font-size:10.2px;line-height:14px;color:#242424;transform:scaleX(0.9053);-webkit-text-stroke:0.04px #242424;">Chargeable</span>
<span class="t" style="left:1301.10px;transform-origin:0 50%;top:613.25px;font-size:10.2px;line-height:14px;color:#242424;transform:scaleX(0.9495);-webkit-text-stroke:0.04px #242424;">Hour journal</span>
<span class="t" style="left:249.80px;transform-origin:0 50%;top:632.25px;font-size:10.2px;line-height:14px;color:#242424;transform:scaleX(0.8552);-webkit-text-stroke:0.04px #242424;">ussi</span>
<span class="t" style="left:363.30px;transform-origin:0 50%;top:632.25px;font-size:10.2px;line-height:14px;color:#242424;transform:scaleX(0.9759);-webkit-text-stroke:0.04px #242424;">6/4/2025</span>
<span class="t" style="left:432.55px;transform-origin:0 50%;top:632.25px;font-size:10.2px;line-height:14px;color:#242424;transform:scaleX(0.8771);-webkit-text-stroke:0.04px #242424;">085698.01</span>
<span class="t" style="left:507.55px;transform-origin:0 50%;top:632.25px;font-size:10.2px;line-height:14px;color:#242424;transform:scaleX(0.9118);-webkit-text-stroke:0.04px #242424;">001</span>
<span class="t" style="left:585.30px;transform-origin:0 50%;top:632.25px;font-size:10.2px;line-height:14px;color:#242424;transform:scaleX(0.9044);-webkit-text-stroke:0.04px #242424;">003388</span>
<span class="t" style="left:642.80px;transform-origin:0 50%;top:632.25px;font-size:10.2px;line-height:14px;color:#242424;transform:scaleX(0.8715);-webkit-text-stroke:0.04px #242424;">S Kundan</span>
<span class="t" style="left:714.05px;transform-origin:0 50%;top:632.25px;font-size:10.2px;line-height:14px;color:#242424;transform:scaleX(0.8955);-webkit-text-stroke:0.04px #242424;">Project...</span>
<span class="t" style="right:1096.5px;transform-origin:100% 50%;top:632.25px;font-size:10.2px;line-height:14px;color:#242424;transform:scaleX(0.8901);-webkit-text-stroke:0.04px #242424;">2.50</span>
<span class="t" style="right:999px;transform-origin:100% 50%;top:632.25px;font-size:10.2px;line-height:14px;color:#242424;transform:scaleX(0.8922);-webkit-text-stroke:0.04px #242424;">25.00</span>
<span class="t" style="left:896.55px;transform-origin:0 50%;top:632.25px;font-size:10.2px;line-height:14px;color:#242424;transform:scaleX(0.8250);-webkit-text-stroke:0.04px #242424;">USD</span>
<span class="t" style="right:822.25px;transform-origin:100% 50%;top:632.25px;font-size:10.2px;line-height:14px;color:#242424;transform:scaleX(0.8934);-webkit-text-stroke:0.04px #242424;">222.00</span>
<span class="t" style="left:1073.10px;transform-origin:0 50%;top:632.25px;font-size:10.2px;line-height:14px;color:#242424;transform:scaleX(0.9130);-webkit-text-stroke:0.04px #242424;">Billable</span>
<span class="t" style="left:1190.80px;transform-origin:0 50%;top:632.25px;font-size:10.2px;line-height:14px;color:#242424;transform:scaleX(0.9053);-webkit-text-stroke:0.04px #242424;">Chargeable</span>
<span class="t" style="left:1301.10px;transform-origin:0 50%;top:632.25px;font-size:10.2px;line-height:14px;color:#242424;transform:scaleX(0.9495);-webkit-text-stroke:0.04px #242424;">Hour journal</span>
<span class="t" style="left:249.80px;transform-origin:0 50%;top:651.25px;font-size:10.2px;line-height:14px;color:#242424;transform:scaleX(0.8552);-webkit-text-stroke:0.04px #242424;">ussi</span>
<span class="t" style="left:363.30px;transform-origin:0 50%;top:651.25px;font-size:10.2px;line-height:14px;color:#242424;transform:scaleX(0.9759);-webkit-text-stroke:0.04px #242424;">6/4/2025</span>
<span class="t" style="left:432.55px;transform-origin:0 50%;top:651.25px;font-size:10.2px;line-height:14px;color:#242424;transform:scaleX(0.8799);-webkit-text-stroke:0.04px #242424;">085698.05.01....</span>
<span class="t" style="left:507.55px;transform-origin:0 50%;top:651.25px;font-size:10.2px;line-height:14px;color:#242424;transform:scaleX(0.9393);-webkit-text-stroke:0.04px #242424;">Demo-Design</span>
<span class="t" style="left:585.30px;transform-origin:0 50%;top:651.25px;font-size:10.2px;line-height:14px;color:#242424;transform:scaleX(0.9044);-webkit-text-stroke:0.04px #242424;">003388</span>
<span class="t" style="left:642.80px;transform-origin:0 50%;top:651.25px;font-size:10.2px;line-height:14px;color:#242424;transform:scaleX(0.8715);-webkit-text-stroke:0.04px #242424;">S Kundan</span>
<span class="t" style="left:714.05px;transform-origin:0 50%;top:651.25px;font-size:10.2px;line-height:14px;color:#242424;transform:scaleX(0.8955);-webkit-text-stroke:0.04px #242424;">Project...</span>
<span class="t" style="right:1096.5px;transform-origin:100% 50%;top:651.25px;font-size:10.2px;line-height:14px;color:#242424;transform:scaleX(0.8922);-webkit-text-stroke:0.04px #242424;">40.00</span>
<span class="t" style="right:999px;transform-origin:100% 50%;top:651.25px;font-size:10.2px;line-height:14px;color:#242424;transform:scaleX(0.8922);-webkit-text-stroke:0.04px #242424;">25.00</span>
<span class="t" style="left:896.55px;transform-origin:0 50%;top:651.25px;font-size:10.2px;line-height:14px;color:#242424;transform:scaleX(0.8250);-webkit-text-stroke:0.04px #242424;">USD</span>
<span class="t" style="right:822.25px;transform-origin:100% 50%;top:651.25px;font-size:10.2px;line-height:14px;color:#242424;transform:scaleX(0.8934);-webkit-text-stroke:0.04px #242424;">195.00</span>
<span class="t" style="left:1073.10px;transform-origin:0 50%;top:651.25px;font-size:10.2px;line-height:14px;color:#242424;transform:scaleX(0.9130);-webkit-text-stroke:0.04px #242424;">Billable</span>
<span class="t" style="left:1190.80px;transform-origin:0 50%;top:651.25px;font-size:10.2px;line-height:14px;color:#242424;transform:scaleX(0.9053);-webkit-text-stroke:0.04px #242424;">Chargeable</span>
<span class="t" style="left:1301.10px;transform-origin:0 50%;top:651.25px;font-size:10.2px;line-height:14px;color:#242424;transform:scaleX(0.9495);-webkit-text-stroke:0.04px #242424;">Hour journal</span>
<span class="t" style="left:249.80px;transform-origin:0 50%;top:671.25px;font-size:10.2px;line-height:14px;color:#242424;transform:scaleX(0.8552);-webkit-text-stroke:0.04px #242424;">ussi</span>
<span class="t" style="left:363.30px;transform-origin:0 50%;top:671.25px;font-size:10.2px;line-height:14px;color:#242424;transform:scaleX(0.9663);-webkit-text-stroke:0.04px #242424;">6/12/2025</span>
<span class="t" style="left:432.55px;transform-origin:0 50%;top:671.25px;font-size:10.2px;line-height:14px;color:#242424;transform:scaleX(0.8958);-webkit-text-stroke:0.04px #242424;">085698.06</span>
<span class="t" style="left:507.55px;transform-origin:0 50%;top:671.25px;font-size:10.2px;line-height:14px;color:#242424;transform:scaleX(0.9393);-webkit-text-stroke:0.04px #242424;">Demo-Design</span>
<span class="t" style="left:585.30px;transform-origin:0 50%;top:671.25px;font-size:10.2px;line-height:14px;color:#242424;transform:scaleX(0.9044);-webkit-text-stroke:0.04px #242424;">003388</span>
<span class="t" style="left:642.80px;transform-origin:0 50%;top:671.25px;font-size:10.2px;line-height:14px;color:#242424;transform:scaleX(0.8715);-webkit-text-stroke:0.04px #242424;">S Kundan</span>
<span class="t" style="left:714.05px;transform-origin:0 50%;top:671.25px;font-size:10.2px;line-height:14px;color:#242424;transform:scaleX(0.8955);-webkit-text-stroke:0.04px #242424;">Project...</span>
<span class="t" style="right:1096.5px;transform-origin:100% 50%;top:671.25px;font-size:10.2px;line-height:14px;color:#242424;transform:scaleX(0.8922);-webkit-text-stroke:0.04px #242424;">10.00</span>
<span class="t" style="right:999px;transform-origin:100% 50%;top:671.25px;font-size:10.2px;line-height:14px;color:#242424;transform:scaleX(0.8922);-webkit-text-stroke:0.04px #242424;">25.00</span>
<span class="t" style="left:896.55px;transform-origin:0 50%;top:671.25px;font-size:10.2px;line-height:14px;color:#242424;transform:scaleX(0.8250);-webkit-text-stroke:0.04px #242424;">USD</span>
<span class="t" style="right:822.25px;transform-origin:100% 50%;top:671.25px;font-size:10.2px;line-height:14px;color:#242424;transform:scaleX(0.8934);-webkit-text-stroke:0.04px #242424;">195.00</span>
<span class="t" style="left:1073.10px;transform-origin:0 50%;top:671.25px;font-size:10.2px;line-height:14px;color:#242424;transform:scaleX(0.9130);-webkit-text-stroke:0.04px #242424;">Billable</span>
<span class="t" style="left:1190.80px;transform-origin:0 50%;top:671.25px;font-size:10.2px;line-height:14px;color:#242424;transform:scaleX(0.9053);-webkit-text-stroke:0.04px #242424;">Chargeable</span>
<span class="t" style="left:1301.10px;transform-origin:0 50%;top:671.25px;font-size:10.2px;line-height:14px;color:#242424;transform:scaleX(0.9495);-webkit-text-stroke:0.04px #242424;">Hour journal</span>
<span class="t" style="left:249.80px;transform-origin:0 50%;top:690.25px;font-size:10.2px;line-height:14px;color:#242424;transform:scaleX(0.8552);-webkit-text-stroke:0.04px #242424;">ussi</span>
<span class="t" style="left:363.30px;transform-origin:0 50%;top:690.25px;font-size:10.2px;line-height:14px;color:#242424;transform:scaleX(0.9663);-webkit-text-stroke:0.04px #242424;">7/24/2025</span>
<span class="t" style="left:432.55px;transform-origin:0 50%;top:690.25px;font-size:10.2px;line-height:14px;color:#242424;transform:scaleX(0.8771);-webkit-text-stroke:0.04px #242424;">085698.01</span>
<span class="t" style="left:507.55px;transform-origin:0 50%;top:690.25px;font-size:10.2px;line-height:14px;color:#242424;transform:scaleX(0.9393);-webkit-text-stroke:0.04px #242424;">Demo-Design</span>
<span class="t" style="left:585.30px;transform-origin:0 50%;top:690.25px;font-size:10.2px;line-height:14px;color:#242424;transform:scaleX(0.9044);-webkit-text-stroke:0.04px #242424;">003388</span>
<span class="t" style="left:642.80px;transform-origin:0 50%;top:690.25px;font-size:10.2px;line-height:14px;color:#242424;transform:scaleX(0.8715);-webkit-text-stroke:0.04px #242424;">S Kundan</span>
<span class="t" style="left:714.05px;transform-origin:0 50%;top:690.25px;font-size:10.2px;line-height:14px;color:#242424;transform:scaleX(0.8955);-webkit-text-stroke:0.04px #242424;">Project...</span>
<span class="t" style="right:1096.5px;transform-origin:100% 50%;top:690.25px;font-size:10.2px;line-height:14px;color:#242424;transform:scaleX(0.8922);-webkit-text-stroke:0.04px #242424;">30.00</span>
<span class="t" style="right:999px;transform-origin:100% 50%;top:690.25px;font-size:10.2px;line-height:14px;color:#242424;transform:scaleX(0.8922);-webkit-text-stroke:0.04px #242424;">25.00</span>
<span class="t" style="left:896.55px;transform-origin:0 50%;top:690.25px;font-size:10.2px;line-height:14px;color:#242424;transform:scaleX(0.8250);-webkit-text-stroke:0.04px #242424;">USD</span>
<span class="t" style="right:822.25px;transform-origin:100% 50%;top:690.25px;font-size:10.2px;line-height:14px;color:#242424;transform:scaleX(0.8934);-webkit-text-stroke:0.04px #242424;">195.00</span>
<span class="t" style="left:1073.10px;transform-origin:0 50%;top:690.25px;font-size:10.2px;line-height:14px;color:#242424;transform:scaleX(0.9130);-webkit-text-stroke:0.04px #242424;">Billable</span>
<span class="t" style="left:1190.80px;transform-origin:0 50%;top:690.25px;font-size:10.2px;line-height:14px;color:#242424;transform:scaleX(0.9053);-webkit-text-stroke:0.04px #242424;">Chargeable</span>
<span class="t" style="left:1301.10px;transform-origin:0 50%;top:690.25px;font-size:10.2px;line-height:14px;color:#242424;transform:scaleX(0.9495);-webkit-text-stroke:0.04px #242424;">Hour journal</span>
<span class="t" style="left:249.80px;transform-origin:0 50%;top:709.25px;font-size:10.2px;line-height:14px;color:#242424;transform:scaleX(0.8552);-webkit-text-stroke:0.04px #242424;">ussi</span>
<span class="t" style="left:363.30px;transform-origin:0 50%;top:709.25px;font-size:10.2px;line-height:14px;color:#242424;transform:scaleX(0.9663);-webkit-text-stroke:0.04px #242424;">8/14/2025</span>
<span class="t" style="left:432.55px;transform-origin:0 50%;top:709.25px;font-size:10.2px;line-height:14px;color:#242424;transform:scaleX(0.8771);-webkit-text-stroke:0.04px #242424;">085698.01</span>
<span class="t" style="left:507.55px;transform-origin:0 50%;top:709.25px;font-size:10.2px;line-height:14px;color:#242424;transform:scaleX(0.9393);-webkit-text-stroke:0.04px #242424;">Demo-Design</span>
<span class="t" style="left:585.30px;transform-origin:0 50%;top:709.25px;font-size:10.2px;line-height:14px;color:#242424;transform:scaleX(0.9044);-webkit-text-stroke:0.04px #242424;">003388</span>
<span class="t" style="left:642.80px;transform-origin:0 50%;top:709.25px;font-size:10.2px;line-height:14px;color:#242424;transform:scaleX(0.8715);-webkit-text-stroke:0.04px #242424;">S Kundan</span>
<span class="t" style="left:714.05px;transform-origin:0 50%;top:709.25px;font-size:10.2px;line-height:14px;color:#242424;transform:scaleX(0.8955);-webkit-text-stroke:0.04px #242424;">Project...</span>
<span class="t" style="right:1096.5px;transform-origin:100% 50%;top:709.25px;font-size:10.2px;line-height:14px;color:#242424;transform:scaleX(0.8922);-webkit-text-stroke:0.04px #242424;">40.00</span>
<span class="t" style="right:999px;transform-origin:100% 50%;top:709.25px;font-size:10.2px;line-height:14px;color:#242424;transform:scaleX(0.8922);-webkit-text-stroke:0.04px #242424;">25.00</span>
<span class="t" style="left:896.55px;transform-origin:0 50%;top:709.25px;font-size:10.2px;line-height:14px;color:#242424;transform:scaleX(0.8250);-webkit-text-stroke:0.04px #242424;">USD</span>
<span class="t" style="right:822.25px;transform-origin:100% 50%;top:709.25px;font-size:10.2px;line-height:14px;color:#242424;transform:scaleX(0.8934);-webkit-text-stroke:0.04px #242424;">195.00</span>
<span class="t" style="left:1073.10px;transform-origin:0 50%;top:709.25px;font-size:10.2px;line-height:14px;color:#242424;transform:scaleX(0.9130);-webkit-text-stroke:0.04px #242424;">Billable</span>
<span class="t" style="left:1190.80px;transform-origin:0 50%;top:709.25px;font-size:10.2px;line-height:14px;color:#242424;transform:scaleX(0.9053);-webkit-text-stroke:0.04px #242424;">Chargeable</span>
<span class="t" style="left:1301.10px;transform-origin:0 50%;top:709.25px;font-size:10.2px;line-height:14px;color:#242424;transform:scaleX(0.9495);-webkit-text-stroke:0.04px #242424;">Hour journal</span>
<span class="t" style="left:1701.80px;transform-origin:0 50%;top:67.25px;font-size:14px;line-height:18px;color:#201f1e;transform:scaleX(0.9472);-webkit-text-stroke:0.25px #201f1e;">Related information</span>
<span class="t" style="left:1701.80px;transform-origin:0 50%;top:100.25px;font-size:10.2px;line-height:14px;color:#242424;transform:scaleX(0.9771);-webkit-text-stroke:0.27px #242424;">Role billing description</span>
<span class="t" style="left:1701.80px;transform-origin:0 50%;top:122.25px;font-size:10.2px;line-height:14px;color:#605e5c;transform:scaleX(0.8966);-webkit-text-stroke:0.04px #605e5c;">Role billing description</span>
<span class="t" style="left:1705.80px;transform-origin:0 50%;top:138.25px;font-size:10.2px;line-height:14px;color:#242424;transform:scaleX(0.9349);-webkit-text-stroke:0.04px #242424;">Manager</span>
<span class="t" style="left:1701.80px;transform-origin:0 50%;top:168.25px;font-size:10.2px;line-height:14px;color:#242424;transform:scaleX(0.9546);-webkit-text-stroke:0.27px #242424;">Timesheet comments</span>
<span class="t" style="left:1701.80px;transform-origin:0 50%;top:190.25px;font-size:10.2px;line-height:14px;color:#605e5c;transform:scaleX(0.9019);-webkit-text-stroke:0.04px #605e5c;">Internal comment</span>
<span class="t" style="left:1705.80px;transform-origin:0 50%;top:210.25px;font-size:10.2px;line-height:14px;color:#242424;transform:scaleX(0.8239);-webkit-text-stroke:0.04px #242424;">AS</span>
<span class="t" style="left:1701.80px;transform-origin:0 50%;top:306.25px;font-size:10.2px;line-height:14px;color:#605e5c;transform:scaleX(0.8830);-webkit-text-stroke:0.04px #605e5c;">External comment</span>
<span class="t" style="left:1705.80px;transform-origin:0 50%;top:326.25px;font-size:10.2px;line-height:14px;color:#242424;transform:scaleX(0.8239);-webkit-text-stroke:0.04px #242424;">AS</span>
</body></html>
